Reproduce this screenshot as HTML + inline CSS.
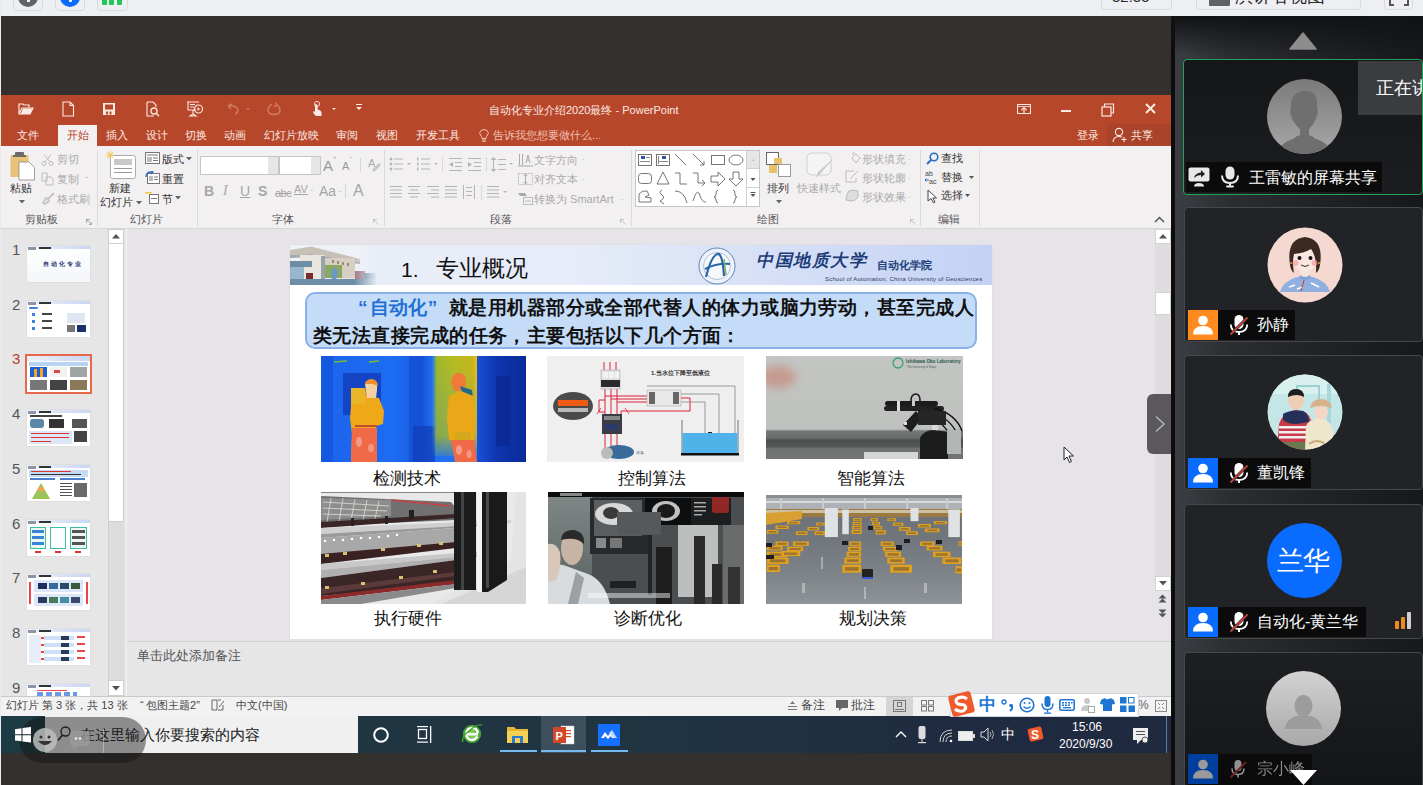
<!DOCTYPE html>
<html><head><meta charset="utf-8">
<style>
*{margin:0;padding:0;box-sizing:border-box}
html,body{width:1423px;height:785px;overflow:hidden;background:#34302d;font-family:"Liberation Sans",sans-serif;position:relative}
.a{position:absolute}
.t{position:absolute;white-space:nowrap;line-height:1}
</style></head><body><div id="wrap" style="position:absolute;left:0;top:0;width:1423px;height:785px;overflow:hidden;filter:blur(0.4px)">
<!-- top bar -->
<div class="a" style="left:0;top:0;width:1423px;height:16px;background:#eeeff2;overflow:hidden">
  <div class="a" style="left:0;top:0;width:1px;height:16px;background:#fff"></div>
  <div class="a" style="left:13px;top:-8px;width:30px;height:19px;border:1px solid #d9dade;border-radius:4px"></div>
  <div class="a" style="left:18px;top:-13px;width:20px;height:20px;border-radius:50%;background:#616469"></div>
  <div class="a" style="left:27px;top:-2px;width:3px;height:4px;background:#fff;border-radius:1px"></div>
  <div class="a" style="left:55px;top:-8px;width:30px;height:19px;border:1px solid #d9dade;border-radius:4px"></div>
  <div class="a" style="left:60px;top:-13px;width:20px;height:20px;border-radius:50%;background:#0a6cff"></div>
  <div class="a" style="left:69px;top:-2px;width:3px;height:4px;background:#fff;border-radius:1px"></div>
  <div class="a" style="left:97px;top:-8px;width:31px;height:19px;border:1px solid #d9dade;border-radius:4px"></div>
  <div class="a" style="left:102px;top:-5px;width:4.5px;height:10px;background:#1ec95a;border-radius:1px"></div>
  <div class="a" style="left:109px;top:-5px;width:4.5px;height:10px;background:#1ec95a;border-radius:1px"></div>
  <div class="a" style="left:117px;top:-5px;width:4.5px;height:10px;background:#1ec95a;border-radius:1px"></div>
  <div class="a" style="left:1101px;top:-8px;width:71px;height:18px;border:1px solid #d9dade;border-radius:3px;background:#eeeff2"></div>
  <div class="t" style="left:1112px;top:-11px;font-size:15px;color:#2a2a2a">32:35</div>
  <div class="a" style="left:1196px;top:-8px;width:165px;height:18px;border:1px solid #d9dade;border-radius:3px"></div>
  <div class="a" style="left:1209px;top:-6px;width:21px;height:12px;background:#5f6166;border-radius:1px"></div>
  <div class="t" style="left:1235px;top:-13px;font-size:18px;color:#2a2a2a">演讲者视图</div>
  <div class="a" style="left:1384px;top:-8px;width:29px;height:18px;border:1px solid #d9dade;border-radius:4px"></div>
  <div class="a" style="left:1389px;top:-4px;width:20px;height:10px;border:2px solid #555;border-top:none"></div>
  <div class="a" style="left:1394px;top:4px;width:10px;height:3px;background:#eeeff2"></div>
</div>
<!-- dark area -->
<div class="a" style="left:0;top:16px;width:1172px;height:79px;background:#34302d"></div>
<!-- ppt window -->
<div class="a" id="ppt" style="left:1px;top:95px;width:1170px;height:621px;background:#e6e6e6;overflow:hidden">
  <div class="a" style="left:0;top:0;width:1170px;height:51px;background:#b7472a"></div>
  <!-- qat icons -->
  <svg class="a" style="left:17px;top:7px" width="16" height="14" viewBox="0 0 16 14"><path d="M1 4 L1 12 L12 12 L15 6 L4 6 L1 12" stroke="#fbeae4" stroke-width="1.2" fill="none"/><path d="M2.5 12 L5 6.5 L14.5 6.5 L12 12Z" fill="#fbeae4"/><path d="M1 4 L1 2 L5 2 L6 3 L11 3 L11 5.5" stroke="#fbeae4" stroke-width="1.2" fill="none"/></svg>
  <svg class="a" style="left:60px;top:6px" width="14" height="16" viewBox="0 0 14 16"><path d="M2 1 L9 1 L12.5 4.5 L12.5 15 L2 15Z M9 1 L9 4.5 L12.5 4.5" stroke="#fbeae4" stroke-width="1.1" fill="none"/></svg>
  <svg class="a" style="left:101px;top:7px" width="14" height="14" viewBox="0 0 14 14"><path d="M1 1 L13 1 L13 13 L1 13Z" fill="#fbeae4"/><rect x="3" y="2.5" width="8" height="5" fill="#b7472a"/><rect x="4" y="9.5" width="2" height="3" fill="#b7472a"/><rect x="7.5" y="9.5" width="2" height="3" fill="#b7472a"/></svg>
  <svg class="a" style="left:144px;top:6px" width="16" height="16" viewBox="0 0 16 16"><path d="M2 1 L8 1 L11 4 L11 6 M2 1 L2 15 L9 15" stroke="#fbeae4" stroke-width="1.1" fill="none"/><circle cx="9" cy="10" r="3" stroke="#fbeae4" stroke-width="1.3" fill="none"/><path d="M11 12 L14 15" stroke="#fbeae4" stroke-width="1.5"/></svg>
  <svg class="a" style="left:185px;top:6px" width="18" height="16" viewBox="0 0 18 16"><path d="M1 1 L13 1 M2 1 L2 9 L10 9" stroke="#fbeae4" stroke-width="1.1" fill="none"/><rect x="4" y="3" width="5" height="1" fill="#fbeae4"/><rect x="4" y="5.5" width="4" height="1" fill="#fbeae4"/><circle cx="12.5" cy="8" r="4" stroke="#fbeae4" stroke-width="1.2" fill="none"/><path d="M11.5 6 L14 8 L11.5 10Z" fill="#fbeae4"/><path d="M7 9 L7 13 M4 15 L10 15 L7 13Z" stroke="#fbeae4" stroke-width="1.1" fill="none"/></svg>
  <svg class="a" style="left:224px;top:8px" width="26" height="12" viewBox="0 0 26 12"><path d="M3 3 L7 1 M3 3 L6 6 M3 3 Q12 2 13 7 Q13 10 10 11" stroke="#cf7a62" stroke-width="1.5" fill="none"/><path d="M21 5 L25 5 L23 7Z" fill="#cf7a62"/></svg>
  <svg class="a" style="left:266px;top:7px" width="14" height="14" viewBox="0 0 14 14"><path d="M10 3 Q13 5 13 8 Q13 12.5 7 12.5 Q1 12.5 1 8 Q1 4 5 2.5 M9 0.5 L10 3 L7 4.5" stroke="#cf7a62" stroke-width="1.5" fill="none"/></svg>
  <svg class="a" style="left:307px;top:5px" width="30" height="18" viewBox="0 0 30 18"><circle cx="9" cy="4" r="2.6" stroke="#f3d3c3" stroke-width="1" fill="none"/><path d="M8 4 Q9.5 4 9.5 5.5 L9.7 9.5 Q13 10 13.5 12.5 L13.5 16 L8 16 Q5.5 14 5 12 Q5.5 11 7 11.5 L7 5.5 Q7 4 8 4Z" fill="#fbeae4"/><path d="M24 8 L28 8 L26 10Z" fill="#fbeae4"/></svg>
  <svg class="a" style="left:354px;top:8px" width="8" height="8" viewBox="0 0 8 8"><rect x="1" y="1" width="6" height="1" fill="#fbeae4"/><path d="M1 4 L7 4 L4 7Z" fill="#fbeae4"/></svg>
  <div class="t" style="left:488px;top:10px;font-size:11px;color:#fbeae4">自动化专业介绍2020最终 - PowerPoint</div>
  <svg class="a" style="left:1016px;top:9px" width="14" height="10" viewBox="0 0 14 10"><rect x="0.5" y="0.5" width="13" height="9" stroke="#fbeae4" fill="none"/><rect x="0.5" y="2" width="13" height="0.8" fill="#fbeae4"/><path d="M7 3.5 L7 9 M4.5 6 L7 3.5 L9.5 6" stroke="#fbeae4" stroke-width="1.2" fill="none"/></svg>
  <div class="a" style="left:1060px;top:15px;width:10px;height:2px;background:#fbeae4"></div>
  <svg class="a" style="left:1100px;top:8px" width="14" height="14" viewBox="0 0 14 14"><rect x="1" y="4" width="9" height="9" stroke="#fbeae4" stroke-width="1.2" fill="none"/><path d="M3.5 4 L3.5 1 L12.5 1 L12.5 10 L10 10" stroke="#fbeae4" stroke-width="1.2" fill="none"/></svg>
  <svg class="a" style="left:1144px;top:8px" width="11" height="11" viewBox="0 0 11 11"><path d="M1 1 L10 10 M10 1 L1 10" stroke="#fbeae4" stroke-width="2"/></svg>
  <!-- tabs -->
  <div class="a" style="left:57px;top:30px;width:39px;height:21px;background:#f3f0f2"></div>
  <div class="t" style="left:16px;top:35px;font-size:11px;color:#fbeae4">文件</div>
  <div class="t" style="left:66px;top:35px;font-size:11px;color:#b7472a">开始</div>
  <div class="t" style="left:105px;top:35px;font-size:11px;color:#fbeae4">插入</div>
  <div class="t" style="left:145px;top:35px;font-size:11px;color:#fbeae4">设计</div>
  <div class="t" style="left:184px;top:35px;font-size:11px;color:#fbeae4">切换</div>
  <div class="t" style="left:223px;top:35px;font-size:11px;color:#fbeae4">动画</div>
  <div class="t" style="left:263px;top:35px;font-size:11px;color:#fbeae4">幻灯片放映</div>
  <div class="t" style="left:335px;top:35px;font-size:11px;color:#fbeae4">审阅</div>
  <div class="t" style="left:375px;top:35px;font-size:11px;color:#fbeae4">视图</div>
  <div class="t" style="left:415px;top:35px;font-size:11px;color:#fbeae4">开发工具</div>
  <svg class="a" style="left:478px;top:34px" width="10" height="13" viewBox="0 0 10 13"><path d="M3 9.5 Q3 7.5 1.5 6 Q0.5 4.5 0.8 3.5 Q1.5 0.6 5 0.6 Q8.5 0.6 9.2 3.5 Q9.5 4.5 8.5 6 Q7 7.5 7 9.5Z M3 11 L7 11 M3.5 12.5 L6.5 12.5" stroke="#f0c4b5" stroke-width="1" fill="none"/></svg>
  <div class="t" style="left:492px;top:35px;font-size:11px;color:#efc0b2">告诉我您想要做什么...</div>
  <div class="t" style="left:1076px;top:35px;font-size:11px;color:#fbeae4">登录</div>
  <div class="a" style="left:1106px;top:29px;width:64px;height:22px;background:#a9432a"></div>
  <svg class="a" style="left:1111px;top:32px" width="16" height="16" viewBox="0 0 16 16"><circle cx="7" cy="5" r="3.6" stroke="#fbeae4" stroke-width="1.1" fill="none"/><path d="M1 15 Q1.5 9.5 7 9.5 Q9 9.5 10 10.3 M12 10 L12 15 M9.5 12.5 L14.5 12.5" stroke="#fbeae4" stroke-width="1.1" fill="none"/></svg>
  <div class="t" style="left:1130px;top:35px;font-size:11px;color:#fbeae4">共享</div>
  <!-- ribbon -->
  <div class="a" style="left:0;top:51px;width:1170px;height:82px;background:#f3f0f2"></div>
</div>
<!-- main area -->
<div class="a" style="left:1px;top:229px;width:1170px;height:468px;background:#e6e4e8"></div>
<!-- thumbnails panel -->
<div class="a" style="left:1px;top:229px;width:125px;height:468px;background:#e6e6e6"></div>
<div class="a" style="left:126px;top:229px;width:1px;height:468px;background:#f2f2f2"></div>
<div class="a" style="left:108px;top:229px;width:16px;height:467px;background:#dcdcdc;border-left:1px solid #cfcfcf"></div>
<div class="a" style="left:108px;top:229px;width:16px;height:15px;background:#fff;border:1px solid #cfcfcf"></div>
<svg class="a" style="left:112px;top:234px" width="8" height="5"><path d="M0 4.5 L8 4.5 L4 0Z" fill="#555"/></svg>
<div class="a" style="left:108px;top:244px;width:16px;height:278px;background:#fff;border:1px solid #cfcfcf;border-top:none"></div>
<div class="a" style="left:108px;top:680px;width:16px;height:16px;background:#fff;border:1px solid #cfcfcf"></div>
<svg class="a" style="left:112px;top:686px" width="8" height="5"><path d="M0 0 L8 0 L4 4.5Z" fill="#555"/></svg>
<div class="t" style="left:12px;top:242px;font-size:15px;color:#555">1</div>
<div class="t" style="left:12px;top:297px;font-size:15px;color:#555">2</div>
<div class="t" style="left:12px;top:351px;font-size:15px;color:#c0392b">3</div>
<div class="t" style="left:12px;top:406px;font-size:15px;color:#555">4</div>
<div class="t" style="left:12px;top:461px;font-size:15px;color:#555">5</div>
<div class="t" style="left:12px;top:516px;font-size:15px;color:#555">6</div>
<div class="t" style="left:12px;top:570px;font-size:15px;color:#555">7</div>
<div class="t" style="left:12px;top:625px;font-size:15px;color:#555">8</div>
<div class="t" style="left:12px;top:680px;font-size:15px;color:#555">9</div>
<!-- thumb 1 -->
<div class="a" style="left:27px;top:246px;width:63px;height:36px;background:linear-gradient(180deg,#fff,#f4f6fa);box-shadow:0 0 1px #bbb;overflow:hidden">
  <div class="a" style="left:0;top:0;width:63px;height:3px;background:linear-gradient(90deg,#eef1f8,#c9d6f3)"></div>
  <div class="a" style="left:1px;top:1px;width:8px;height:3px;background:#8a96a6"></div><div class="a" style="left:12px;top:1px;width:12px;height:2px;background:#333"></div>
  <div class="t" style="left:16px;top:15px;font-size:6px;font-weight:bold;color:#2a3b7a;letter-spacing:2px">自动化专业</div>
</div>
<!-- thumb 2 -->
<div class="a" style="left:27px;top:301px;width:63px;height:36px;background:#fff;box-shadow:0 0 1px #bbb;overflow:hidden">
  <div class="a" style="left:0;top:0;width:63px;height:3px;background:linear-gradient(90deg,#eef1f8,#c9d6f3)"></div>
  <div class="a" style="left:1px;top:1px;width:8px;height:3px;background:#8a96a6"></div><div class="a" style="left:12px;top:1px;width:12px;height:2px;background:#333"></div>
  <div class="a" style="left:2px;top:6px;width:9px;height:2px;background:#3b82d9;border-radius:1px"></div>
  <div class="a" style="left:5px;top:12px;width:3px;height:3px;background:#3b82d9"></div><div class="a" style="left:15px;top:12px;width:10px;height:2px;background:#444"></div>
  <div class="a" style="left:5px;top:19px;width:3px;height:3px;background:#3b82d9"></div><div class="a" style="left:15px;top:19px;width:10px;height:2px;background:#444"></div>
  <div class="a" style="left:5px;top:26px;width:3px;height:3px;background:#3b82d9"></div><div class="a" style="left:15px;top:26px;width:10px;height:2px;background:#444"></div>
  <div class="a" style="left:40px;top:12px;width:18px;height:10px;background:#dfe6f2"></div>
  <div class="a" style="left:40px;top:24px;width:8px;height:7px;background:#777"></div><div class="a" style="left:50px;top:24px;width:9px;height:7px;background:#1b2f6e"></div>
</div>
<!-- thumb 3 selected -->
<div class="a" style="left:25px;top:354px;width:67px;height:40px;border:2px solid #e8694a;background:#fff;overflow:hidden">
  <div class="a" style="left:0;top:0;width:63px;height:5px;background:linear-gradient(90deg,#eef1f8,#c9d6f3)"></div>
  <div class="a" style="left:2px;top:6px;width:59px;height:4px;background:#b9d3f3"></div>
  <div class="a" style="left:3px;top:11px;width:17px;height:10px;background:#1e5fd6"></div><div class="a" style="left:7px;top:13px;width:3px;height:8px;background:#f5a623"></div><div class="a" style="left:13px;top:12px;width:3px;height:9px;background:#f5a623"></div>
  <div class="a" style="left:23px;top:11px;width:17px;height:10px;background:#f2f2f2"></div><div class="a" style="left:27px;top:14px;width:6px;height:3px;background:#d44"></div>
  <div class="a" style="left:43px;top:11px;width:17px;height:10px;background:#9fa5a3"></div>
  <div class="a" style="left:3px;top:24px;width:17px;height:10px;background:#777"></div>
  <div class="a" style="left:23px;top:24px;width:17px;height:10px;background:#444"></div>
  <div class="a" style="left:43px;top:24px;width:17px;height:10px;background:#8a7a5a"></div>
</div>
<!-- thumb 4 -->
<div class="a" style="left:27px;top:410px;width:63px;height:36px;background:#fff;box-shadow:0 0 1px #bbb;overflow:hidden">
  <div class="a" style="left:0;top:0;width:63px;height:3px;background:linear-gradient(90deg,#eef1f8,#c9d6f3)"></div>
  <div class="a" style="left:1px;top:1px;width:8px;height:3px;background:#8a96a6"></div><div class="a" style="left:12px;top:1px;width:12px;height:2px;background:#333"></div>
  <div class="a" style="left:3px;top:5px;width:32px;height:2px;background:#444"></div>
  <div class="a" style="left:3px;top:9px;width:14px;height:9px;background:#5b87a8;border-radius:3px"></div>
  <div class="a" style="left:22px;top:9px;width:15px;height:9px;background:#333"></div>
  <div class="a" style="left:45px;top:9px;width:15px;height:9px;background:#555"></div>
  <div class="a" style="left:2px;top:21px;width:43px;height:13px;background:#dde6f7"></div>
  <div class="a" style="left:4px;top:23px;width:38px;height:1px;background:#d33"></div><div class="a" style="left:4px;top:27px;width:38px;height:1px;background:#d33"></div><div class="a" style="left:4px;top:31px;width:20px;height:1px;background:#d33"></div>
  <div class="a" style="left:47px;top:21px;width:13px;height:11px;background:#444"></div>
</div>
<!-- thumb 5 -->
<div class="a" style="left:27px;top:465px;width:63px;height:36px;background:#fff;box-shadow:0 0 1px #bbb;overflow:hidden">
  <div class="a" style="left:0;top:0;width:63px;height:3px;background:linear-gradient(90deg,#eef1f8,#c9d6f3)"></div>
  <div class="a" style="left:1px;top:1px;width:8px;height:3px;background:#8a96a6"></div><div class="a" style="left:12px;top:1px;width:12px;height:2px;background:#333"></div>
  <div class="a" style="left:2px;top:5px;width:59px;height:7px;background:#c5daf5"></div><div class="a" style="left:4px;top:6px;width:40px;height:1px;background:#d33"></div><div class="a" style="left:4px;top:9px;width:50px;height:1px;background:#333"></div>
  <div class="a" style="left:3px;top:13px;width:25px;height:2px;background:#4a7fd0"></div><div class="a" style="left:33px;top:13px;width:25px;height:2px;background:#4a7fd0"></div>
  <svg class="a" style="left:2px;top:16px" width="28" height="19"><path d="M3 18 L12 2 L21 18Z" fill="#9ac35a"/><path d="M8 10 L16 10 L14 6 L10 6Z" fill="#f2a55a"/></svg>
  <div class="a" style="left:33px;top:18px;width:12px;height:14px;background:repeating-linear-gradient(180deg,#555 0 1px,#fff 1px 3px)"></div>
  <div class="a" style="left:47px;top:18px;width:13px;height:14px;background:#6a6a6a"></div>
</div>
<!-- thumb 6 -->
<div class="a" style="left:27px;top:520px;width:63px;height:36px;background:#fff;box-shadow:0 0 1px #bbb;overflow:hidden">
  <div class="a" style="left:0;top:0;width:63px;height:3px;background:linear-gradient(90deg,#eef1f8,#c9d6f3)"></div>
  <div class="a" style="left:1px;top:1px;width:8px;height:3px;background:#8a96a6"></div><div class="a" style="left:12px;top:1px;width:12px;height:2px;background:#333"></div>
  <div class="a" style="left:3px;top:7px;width:16px;height:22px;border:1px solid #3bbfa0;background:#eaf7f3"></div>
  <div class="a" style="left:23px;top:7px;width:16px;height:22px;border:1px solid #3bbfa0;background:#fff"></div>
  <div class="a" style="left:43px;top:7px;width:17px;height:22px;border:1px solid #3bbfa0;background:#eaf7f3"></div>
  <div class="a" style="left:5px;top:10px;width:12px;height:3px;background:#3b82d9"></div><div class="a" style="left:5px;top:16px;width:12px;height:3px;background:#3b82d9"></div><div class="a" style="left:5px;top:22px;width:12px;height:3px;background:#3b82d9"></div>
  <div class="a" style="left:45px;top:10px;width:13px;height:3px;background:#555"></div><div class="a" style="left:45px;top:16px;width:13px;height:3px;background:#555"></div><div class="a" style="left:45px;top:22px;width:13px;height:3px;background:#555"></div>
  <div class="a" style="left:8px;top:31px;width:6px;height:2px;background:#d33"></div><div class="a" style="left:28px;top:31px;width:6px;height:2px;background:#d33"></div><div class="a" style="left:48px;top:31px;width:6px;height:2px;background:#d33"></div>
</div>
<!-- thumb 7 -->
<div class="a" style="left:27px;top:574px;width:63px;height:36px;background:#fff;box-shadow:0 0 1px #bbb;overflow:hidden">
  <div class="a" style="left:0;top:0;width:63px;height:3px;background:linear-gradient(90deg,#eef1f8,#c9d6f3)"></div>
  <div class="a" style="left:1px;top:1px;width:8px;height:3px;background:#8a96a6"></div><div class="a" style="left:12px;top:1px;width:12px;height:2px;background:#333"></div>
  <div class="a" style="left:7px;top:6px;width:49px;height:12px;background:#dce8fa"></div>
  <div class="a" style="left:7px;top:20px;width:49px;height:12px;background:#dce8fa"></div>
  <div class="a" style="left:11px;top:9px;width:9px;height:6px;background:#1b2f5a"></div><div class="a" style="left:22px;top:9px;width:9px;height:6px;background:#3a6a9a"></div><div class="a" style="left:33px;top:9px;width:9px;height:6px;background:#2a4a6a"></div><div class="a" style="left:44px;top:9px;width:9px;height:6px;background:#3a5a3a"></div>
  <div class="a" style="left:11px;top:23px;width:9px;height:6px;background:#2a3a5a"></div><div class="a" style="left:22px;top:23px;width:9px;height:6px;background:#4a7a5a"></div><div class="a" style="left:33px;top:23px;width:9px;height:6px;background:#4a8aaa"></div><div class="a" style="left:44px;top:23px;width:9px;height:6px;background:#3a4a6a"></div>
  <div class="a" style="left:2px;top:8px;width:2px;height:22px;background:#e44"></div><div class="a" style="left:59px;top:8px;width:2px;height:22px;background:#e44"></div>
</div>
<!-- thumb 8 -->
<div class="a" style="left:27px;top:629px;width:63px;height:36px;background:#fff;box-shadow:0 0 1px #bbb;overflow:hidden">
  <div class="a" style="left:0;top:0;width:63px;height:3px;background:linear-gradient(90deg,#eef1f8,#c9d6f3)"></div>
  <div class="a" style="left:1px;top:1px;width:8px;height:3px;background:#8a96a6"></div><div class="a" style="left:12px;top:1px;width:12px;height:2px;background:#333"></div>
  <div class="a" style="left:2px;top:6px;width:12px;height:28px;background:#e8eef8"></div>
  <div class="a" style="left:17px;top:7px;width:30px;height:26px;background:repeating-linear-gradient(180deg,#cfe0f6 0 4px,#fff 4px 7px)"></div>
  <div class="a" style="left:34px;top:7px;width:8px;height:26px;background:repeating-linear-gradient(180deg,#2a3a5a 0 4px,#fff 4px 7px)"></div>
  <div class="a" style="left:50px;top:7px;width:8px;height:26px;background:repeating-linear-gradient(180deg,#e44 0 2px,#fff 2px 7px)"></div>
  <div class="a" style="left:14px;top:8px;width:3px;height:24px;background:repeating-linear-gradient(180deg,#e44 0 2px,#fff 2px 7px)"></div>
</div>
<!-- thumb 9 -->
<div class="a" style="left:27px;top:684px;width:63px;height:12px;background:#fff;box-shadow:0 0 1px #bbb;overflow:hidden">
  <div class="a" style="left:0;top:0;width:63px;height:3px;background:linear-gradient(90deg,#eef1f8,#c9d6f3)"></div>
  <div class="a" style="left:1px;top:1px;width:8px;height:3px;background:#8a96a6"></div><div class="a" style="left:12px;top:1px;width:12px;height:2px;background:#333"></div>
  <div class="a" style="left:10px;top:6px;width:30px;height:1px;background:#e44"></div>
  <div class="a" style="left:10px;top:8px;width:40px;height:4px;background:repeating-linear-gradient(90deg,#6a9ae6 0 6px,#fff 6px 9px)"></div>
</div>
<!-- right scrollbar -->
<div class="a" style="left:1155px;top:229px;width:16px;height:362px;background:#dedcde"></div>
<div class="a" style="left:1155px;top:229px;width:16px;height:15px;background:#fff;border:1px solid #d2d2d2"></div>
<svg class="a" style="left:1159px;top:234px" width="8" height="5"><path d="M0 4.5 L8 4.5 L4 0Z" fill="#555"/></svg>
<div class="a" style="left:1155px;top:292px;width:16px;height:23px;background:#fff;border:1px solid #d2d2d2"></div>
<div class="a" style="left:1155px;top:576px;width:16px;height:15px;background:#fff;border:1px solid #d2d2d2"></div>
<svg class="a" style="left:1159px;top:581px" width="8" height="5"><path d="M0 0 L8 0 L4 4.5Z" fill="#555"/></svg>
<svg class="a" style="left:1158px;top:594px" width="9" height="24" viewBox="0 0 9 24"><path d="M0.5 4.5 L4.5 0.5 L8.5 4.5Z M0.5 8.5 L4.5 4.5 L8.5 8.5Z" fill="#555"/><path d="M0.5 15.5 L4.5 19.5 L8.5 15.5Z M0.5 19.5 L4.5 23.5 L8.5 19.5Z" fill="#555"/></svg>
<!-- slide -->
<div class="a" style="left:290px;top:245px;width:702px;height:394px;background:#fff;box-shadow:0 0 1px #c8c8c8;overflow:hidden">
  <div class="a" style="left:0;top:0;width:702px;height:40px;background:linear-gradient(90deg,#e9eef7 0%,#e6ecf8 40%,#d3ddf6 75%,#c3d2f4 100%)"></div>
  <!-- building photo -->
  <svg class="a" style="left:0;top:0" width="92" height="40" viewBox="0 0 92 40">
    <defs><linearGradient id="bf" x1="0" x2="1"><stop offset="0.7" stop-color="#fff" stop-opacity="1"/><stop offset="0.95" stop-color="#fff" stop-opacity="0"/></linearGradient><mask id="bm"><rect width="92" height="40" fill="url(#bf)"/></mask></defs>
    <g mask="url(#bm)">
    <rect width="92" height="40" fill="#eef2f6"/>
    <path d="M0 5 L21 1.5 L70 14 L70 17 L21 9 L0 10Z" fill="#c6c0b6"/>
    <path d="M0 10 L21 9 L70 17 L70 19 L21 12 L0 13Z" fill="#a8a8a8"/>
    <rect x="10" y="10" width="24" height="25" fill="#e9e5e0"/>
    <rect x="31" y="11" width="4" height="25" fill="#9aa2aa"/>
    <rect x="35" y="13" width="30" height="20" fill="#d8cfc4"/>
    <g fill="#9a8a78"><rect x="42" y="15" width="2" height="3"/><rect x="47" y="16" width="2" height="3"/><rect x="52" y="17" width="2" height="3"/><rect x="57" y="18" width="2" height="3"/></g>
    <rect x="35" y="20" width="17" height="13" fill="#8aa862"/>
    <path d="M41 26 L45 22 L48 26 L46 36 L42 36Z" fill="#6a9ac0"/>
    <rect x="0" y="16" width="22" height="6" fill="#6e8ca4"/>
    <rect x="0" y="22" width="14" height="14" fill="#9ab6cc"/>
    <rect x="16" y="28" width="7" height="8" fill="#7a2a2a"/>
    <path d="M50 33 L74 33 L74 36 L50 37Z" fill="#e8e4dc"/>
    <rect x="65" y="26" width="10" height="10" fill="#a07888"/>
    <rect x="74" y="28" width="12" height="8" fill="#5a7890"/>
    <rect x="0" y="34" width="92" height="6" fill="#6e8ea8"/>
    </g>
  </svg>
  <div class="t" style="left:111px;top:14px;font-size:21px;color:#111">1.</div><div class="t" style="left:146px;top:13px;font-size:22.5px;color:#111">专业概况</div>
  <!-- logo -->
  <svg class="a" style="left:407px;top:2px" width="40" height="38" viewBox="0 0 40 38">
    <circle cx="20" cy="19" r="18" fill="#eef3fa" stroke="#5f86b0" stroke-width="1"/>
    <circle cx="20" cy="19" r="13.5" fill="#f6f8fc" stroke="#7fa0c4" stroke-width="0.6"/>
    <path d="M9 30 Q15 6 22 7 Q26 10 27 29" stroke="#2a64a8" stroke-width="2.2" fill="none"/>
    <path d="M8 22 Q20 16 33 17" stroke="#2a64a8" stroke-width="2" fill="none"/>
    <path d="M27 12 L29 28" stroke="#7cb36a" stroke-width="1.5"/>
  </svg>
  <div class="t" style="left:466px;top:7px;font-size:17px;font-weight:bold;color:#1d3d78;font-family:'Liberation Serif',serif;font-style:italic;letter-spacing:1.6px">中国地质大学</div>
  <div class="t" style="left:587px;top:15px;font-size:10.5px;font-weight:bold;color:#1d3d78">自动化学院</div>
  <div class="t" style="left:535px;top:31px;font-size:6px;color:#2d3b5e;letter-spacing:0.2px">School of Automation, China University of Geosciences</div>
  <!-- text box -->
  <div class="a" style="left:15px;top:47px;width:672px;height:57px;border:2px solid #8ab2ea;border-radius:10px;background:#c4dcf7"></div>
  <div class="t" style="left:68px;top:53px;font-size:19px;letter-spacing:0.45px;font-weight:bold;color:#111"><span style="color:#1e6fd6"><span style="display:inline-block;width:11.5px">“</span>自动化<span style="display:inline-block;width:21px">”</span></span>就是用机器部分或全部代替人的体力或脑力劳动，甚至完成人</div>
  <div class="t" style="left:23px;top:81px;font-size:19px;letter-spacing:0.45px;font-weight:bold;color:#111">类无法直接完成的任务，主要包括以下几个方面：</div>
  <!-- photo 1 thermal -->
  <div class="a" style="left:31px;top:111px;width:205px;height:106px;overflow:hidden;background:#1a62ea">
    <svg class="a" style="left:0;top:0" width="205" height="106" viewBox="0 0 205 106">
      <defs>
        <linearGradient id="th1" x1="0" x2="1"><stop offset="0" stop-color="#1c64ec"/><stop offset="0.35" stop-color="#1d6cf2"/><stop offset="0.5" stop-color="#1858e0"/><stop offset="0.55" stop-color="#1f70f0"/><stop offset="1" stop-color="#2a7af0"/></linearGradient>
        <linearGradient id="th2" x1="0" x2="1"><stop offset="0" stop-color="#3a90e0" stop-opacity="0"/><stop offset="0.12" stop-color="#a0b828"/><stop offset="0.5" stop-color="#b8bc20"/><stop offset="0.9" stop-color="#c8b818"/><stop offset="1" stop-color="#f0c010"/></linearGradient>
        <linearGradient id="th2v" x1="0" y1="0" x2="0" y2="1"><stop offset="0" stop-color="#fff" stop-opacity="1"/><stop offset="0.75" stop-color="#fff" stop-opacity="0.8"/><stop offset="1" stop-color="#fff" stop-opacity="0"/></linearGradient>
        <mask id="th2m"><rect width="205" height="106" fill="url(#th2v)"/></mask>
        <linearGradient id="th3" x1="0" x2="1"><stop offset="0" stop-color="#1a50d8"/><stop offset="0.4" stop-color="#0e36b0"/><stop offset="1" stop-color="#0a2a98"/></linearGradient>
      </defs>
      <rect width="205" height="106" fill="url(#th1)"/>
      <rect x="0" y="0" width="12" height="106" fill="#1558e0"/>
      <rect x="22" y="17" width="38" height="42" fill="#1244c4"/>
      <rect x="88" y="0" width="14" height="106" fill="#1450d4" opacity=".8"/>
      <rect x="92" y="70" width="22" height="36" fill="#0f3cb8" opacity=".7"/>
      <rect x="110" y="0" width="46" height="100" fill="url(#th2)" mask="url(#th2m)"/>
      <rect x="156" y="0" width="49" height="106" fill="url(#th3)"/>
      <rect x="175" y="20" width="14" height="70" fill="#0a2890" opacity=".7"/>
      <path d="M13 6 L26 5 M48 6 L58 5" stroke="#7ab83a" stroke-width="1.4"/>
      <!-- person 1 -->
      <path d="M30 33 L44 32 L46 40 L58 42 L63 55 L62 68 L55 70 L56 106 L30 106 L31 78 L29 62 L30 50Z" fill="#eea818"/>
      <rect x="30" y="32" width="14" height="16" fill="#e8b428"/>
      <path d="M44 28 Q45 24 51 24 Q57 26 56 34 L55 42 L46 42Z" fill="#f5d0a0"/>
      <path d="M44 28 Q45 23 51 23 Q57 24 57 30 L52 28Z" fill="#f09030"/>
      <path d="M31 72 L56 72 L56 106 L30 106Z" fill="#f06a48"/>
      <ellipse cx="38" cy="86" rx="3" ry="5" fill="#f8a898" opacity=".8"/><ellipse cx="50" cy="92" rx="3" ry="4" fill="#f8a898" opacity=".7"/>
      <path d="M34 70 L56 70" stroke="#c84a30" stroke-width="2"/>
      <!-- person 2 -->
      <path d="M130 26 Q131 17 138 17 Q146 18 145 27 L143 35 L133 35Z" fill="#f07a38"/>
      <path d="M139 30 L151 34 L152 42 L142 40Z" fill="#206a88"/>
      <path d="M128 40 L140 35 L152 40 L154 60 L153 84 L128 84 L126 62Z" fill="#eaa818"/>
      <path d="M130 84 L153 84 L156 106 L134 106Z" fill="#f06a48"/>
      <ellipse cx="138" cy="94" rx="3" ry="5" fill="#f8a898" opacity=".8"/><ellipse cx="148" cy="98" rx="2.5" ry="4" fill="#f8a898" opacity=".7"/>
      <path d="M134 76 L150 76 L150 84 L134 84Z" fill="#c8a820" opacity=".7"/>
    </svg>
  </div>
  <div class="t" style="left:83px;top:225px;font-size:17px;color:#111">检测技术</div>
  <!-- photo 2 circuit -->
  <div class="a" style="left:257px;top:111px;width:197px;height:106px;background:#efefef;overflow:hidden">
    <svg class="a" style="left:0;top:0" width="197" height="106" viewBox="0 0 197 106">
      <g stroke="#e0203a" stroke-width="1" fill="none">
        <path d="M57 6 L57 16 M63 6 L63 16 M69 6 L69 16"/>
        <path d="M58 32 L58 58 M64 32 L64 58 M70 32 L70 58"/>
        <path d="M58 40 L104 40 M64 43 L104 43 M70 46 L104 46"/>
        <path d="M52 56 L52 44 L58 44 M52 56 L58 56"/>
        <path d="M133 42 L143 42 L143 55 L74 55 L74 58"/>
        <path d="M58 78 L58 92 M64 78 L64 92 M70 78 L70 92"/>
      </g>
      <path d="M54 52 L50 58 M78 52 L82 58" stroke="#e0203a" stroke-width="0.8"/>
      <g stroke="#777" stroke-width="0.7" fill="none"><path d="M100 30 L188 30 L188 92 M133 38 L172 38 L172 86 M133 46 L158 46 L158 78"/></g>
      <rect x="161" y="76" width="4" height="3" fill="#222"/><rect x="170" y="85" width="4" height="3" fill="#222"/><rect x="185" y="90" width="4" height="3" fill="#222"/>
      <rect x="54" y="14" width="19" height="19" fill="#e0e0e0" stroke="#aaa" stroke-width="0.6"/>
      <rect x="54" y="24" width="19" height="7" fill="#2a2a2a"/>
      <rect x="56" y="16" width="5" height="6" fill="#f4f4f4"/><rect x="62" y="16" width="5" height="6" fill="#f4f4f4"/><rect x="68" y="16" width="4" height="6" fill="#f4f4f4"/>
      <rect x="55" y="58" width="20" height="20" fill="#3a3d44"/>
      <rect x="57" y="60" width="16" height="4" fill="#888"/>
      <rect x="58" y="68" width="13" height="6" fill="#2a3a6a"/>
      <rect x="100" y="34" width="34" height="16" fill="#e8e8e8" stroke="#aaa" stroke-width="0.6"/>
      <rect x="102" y="36" width="6" height="12" fill="#666"/><rect x="126" y="36" width="6" height="12" fill="#666"/>
      <ellipse cx="26" cy="50" rx="20" ry="14" fill="#4a4a4a"/>
      <rect x="11" y="44" width="30" height="6" fill="#f05a14"/>
      <rect x="11" y="52" width="30" height="4" fill="#b8b8b8"/>
      <path d="M135 64 L135 98 L191 98 L191 64" stroke="#555" stroke-width="0.8" fill="none"/>
      <rect x="135.5" y="77" width="55" height="21" fill="#4fb3ea"/>
      <rect x="134" y="97" width="58" height="2.5" fill="#111"/>
      <ellipse cx="72" cy="96" rx="15" ry="7" fill="#3a6a9a"/>
      <ellipse cx="60" cy="97" rx="6" ry="6" fill="#bbb"/>
      <text x="104" y="19" font-size="6" fill="#333" font-weight="bold" font-family="Liberation Sans">1.当水位下降至低液位</text>
      <text x="89" y="98" font-size="4" fill="#444" font-family="Liberation Sans">水泵</text>
    </svg>
  </div>
  <div class="t" style="left:328px;top:225px;font-size:17px;color:#111">控制算法</div>
  <!-- photo 3 robot -->
  <div class="a" style="left:476px;top:111px;width:197px;height:103px;overflow:hidden;background:linear-gradient(180deg,#c2c5c2 0%,#bec1be 71%,#737775 73%,#6a6e6c 79%,#4c504e 82%,#535755 88%,#6e7270 90%,#707472 100%)">
    <div class="a" style="left:-6px;top:10px;width:36px;height:22px;background:#c8968a;border-radius:50%;filter:blur(4px);opacity:.9"></div>
    <svg class="a" style="left:0;top:0" width="197" height="103" viewBox="0 0 197 103">
      <rect x="119" y="45" width="53" height="5" rx="2.5" fill="#1c1c1c"/>
      <rect x="118" y="50" width="60" height="5" rx="2.5" fill="#222"/>
      <rect x="131" y="45" width="3" height="10" fill="#ddd"/><rect x="146" y="45" width="3" height="5" fill="#ccc"/>
      <path d="M145 45 Q145 38 150 38 Q154 38 154 45" stroke="#1a1a1a" stroke-width="1.5" fill="none"/>
      <path d="M150 55 L137 69 L145 76 L156 62Z" fill="#1e1e1e"/>
      <rect x="138" y="66" width="3" height="3" fill="#ddd"/>
      <path d="M168 52 Q190 58 196 75" stroke="#111" stroke-width="1.3" fill="none"/>
      <path d="M165 56 Q185 62 192 80" stroke="#111" stroke-width="1.3" fill="none"/>
      <path d="M160 58 Q178 66 186 82" stroke="#111" stroke-width="1.3" fill="none"/>
      <rect x="152" y="55" width="28" height="14" fill="#262626"/>
      <rect x="166" y="69" width="6" height="8" fill="#d8d8d8"/>
      <path d="M154 103 L154 82 Q158 74 168 74 L182 76 L182 103Z" fill="#1c1c1c"/>
      <rect x="181" y="74" width="14" height="24" fill="#b2b6b6"/>
      <rect x="98" y="96" width="54" height="7" fill="#d4d6d6"/>
      <text x="140" y="7" font-size="4.6" fill="#2a5a4a" font-family="Liberation Sans" font-weight="bold">Ishikawa Oku Laboratory</text>
      <text x="141" y="11.5" font-size="2.8" fill="#4a5a5a" font-family="Liberation Sans">The University of Tokyo</text>
      <circle cx="132" cy="7" r="5" stroke="#3aa07a" stroke-width="1.3" fill="none"/>
    </svg>
  </div>
  <div class="t" style="left:547px;top:225px;font-size:17px;color:#111">智能算法</div>
  <!-- photo 4 warehouse shelves -->
  <div class="a" style="left:31px;top:247px;width:205px;height:112px;overflow:hidden;background:#e9e9e9">
    <svg class="a" style="left:0;top:0" width="205" height="112" viewBox="0 0 205 112">
      <path d="M0 0 L150 0" stroke="#222" stroke-width="1.2"/>
      <path d="M205 0 L205 112 L110 112 L190 70 L195 0Z" fill="#e4e4e4"/>
      <path d="M120 112 L205 75 L205 112Z" fill="#d6d6d6"/>
      <!-- top layer -->
      <path d="M0 4 L130 10 L135 16 L135 28 L0 34Z" fill="#707070"/>
      <path d="M0 6 L70 8 L70 24 L0 28Z" fill="#9a9a9a" opacity=".7"/>
      <g stroke="#e8e8e0" stroke-width="0.8" opacity=".9"><path d="M2 10 L68 14 M2 16 L66 19 M2 22 L60 24 M10 6 L6 30 M22 6 L18 30 M34 7 L30 29 M46 8 L42 28 M58 9 L54 27"/></g>
      <path d="M70 8 L130 14" stroke="#c84040" stroke-width="1.5"/>
      <path d="M0 30 L135 22 L135 26 L0 36Z" fill="#3a2626"/>
      <rect x="30" y="26" width="3" height="8" fill="#222"/><rect x="64" y="24" width="3" height="8" fill="#222"/><rect x="88" y="18" width="5" height="9" fill="#222"/>
      <!-- plate 1 -->
      <path d="M0 36 L190 28 L190 31 L0 42Z" fill="#cfcfcf"/>
      <path d="M0 42 L190 31 L135 36 L0 46Z" fill="#9a9a9a"/>
      <!-- middle layer -->
      <path d="M0 46 L135 36 L135 52 L0 64Z" fill="#a8a8a8"/>
      <g fill="#fff"><circle cx="4" cy="49" r="1.3"/><circle cx="13" cy="48" r="1.3"/><circle cx="22" cy="48" r="1.3"/><circle cx="31" cy="47" r="1.3"/><circle cx="40" cy="46" r="1.3"/><circle cx="49" cy="46" r="1.3"/><circle cx="58" cy="45" r="1.3"/><circle cx="67" cy="44" r="1.3"/><circle cx="76" cy="43" r="1.3"/></g>
      <path d="M0 62 L135 50 L135 56 L0 72Z" fill="#3a2222"/>
      <g fill="#d8c070"><rect x="4" y="62" width="4" height="3"/><rect x="22" y="60" width="4" height="3"/><rect x="60" y="56" width="4" height="3"/><rect x="96" y="52" width="4" height="3"/><rect x="118" y="50" width="4" height="3"/></g>
      <!-- plate 2 -->
      <path d="M0 72 L186 57 L186 60 L0 78Z" fill="#c8c8c8"/>
      <path d="M0 78 L186 60 L135 68 L0 86Z" fill="#b0b0b0"/>
      <!-- bottom layer -->
      <path d="M0 86 L135 68 L135 92 L0 104Z" fill="#3a2626"/>
      <path d="M0 96 L135 80 L135 84 L0 102Z" fill="#5a3a3a"/>
      <path d="M0 104 L135 88 L135 92 L0 108Z" fill="#8a2a2a"/>
      <path d="M0 108 L135 92 L135 96 L40 112 L0 112Z" fill="#8a8a8a"/>
      <g fill="#d8c070"><rect x="4" y="94" width="4" height="3"/><rect x="40" y="90" width="4" height="3"/><rect x="78" y="84" width="4" height="3"/><rect x="112" y="78" width="4" height="3"/></g>
      <!-- columns -->
      <rect x="133" y="0" width="22" height="98" fill="#1c1c1c"/>
      <rect x="140" y="0" width="3" height="98" fill="#444"/>
      <rect x="156" y="0" width="5" height="100" fill="#f4f4f4"/>
      <path d="M161 0 L186 0 L186 88 L167 100 L161 100Z" fill="#1a1a1a"/>
      <rect x="165" y="0" width="3" height="96" fill="#4a4a4a"/>
    </svg>
  </div>
  <div class="t" style="left:84px;top:365px;font-size:17px;color:#111">执行硬件</div>
  <!-- photo 5 doctor -->
  <div class="a" style="left:258px;top:247px;width:196px;height:112px;overflow:hidden;background:#0d0d0d">
    <svg class="a" style="left:0;top:0" width="196" height="112" viewBox="0 0 196 112">
      <defs><linearGradient id="dw" x1="0" y1="0" x2="0" y2="1"><stop offset="0" stop-color="#7e8686"/><stop offset="1" stop-color="#5a6060"/></linearGradient></defs>
      <rect x="0" y="5" width="196" height="107" fill="#4a4e50"/>
      <rect x="0" y="5" width="44" height="107" fill="url(#dw)"/>
      <rect x="42" y="6" width="58" height="56" fill="#262a2c"/>
      <rect x="46" y="8" width="48" height="36" fill="#5a5e60"/>
      <ellipse cx="66" cy="22" rx="19" ry="11" fill="#d8d8d8"/>
      <ellipse cx="63" cy="21" rx="8" ry="6" fill="#3a3a3a"/>
      <rect x="48" y="46" width="10" height="10" fill="#888"/><rect x="62" y="46" width="12" height="10" fill="#777"/>
      <rect x="97" y="6" width="46" height="27" fill="#0c0e10"/>
      <ellipse cx="118" cy="19" rx="14" ry="10" fill="#c0c0c0"/>
      <ellipse cx="118" cy="19" rx="9" ry="7" fill="#1a1a1a"/>
      <rect x="143" y="6" width="40" height="27" fill="#1c1e20"/>
      <g fill="#aaa"><rect x="146" y="10" width="12" height="1.5"/><rect x="146" y="14" width="12" height="1.5"/><rect x="146" y="18" width="12" height="1.5"/><rect x="146" y="22" width="8" height="1.5"/></g>
      <rect x="69" y="20" width="44" height="23" fill="#55595b"/>
      <rect x="100" y="43" width="4" height="60" fill="#222"/>
      <rect x="130" y="33" width="40" height="72" fill="#bdbfbf"/>
      <rect x="175" y="33" width="21" height="79" fill="#6a6c6c"/>
      <rect x="108" y="55" width="16" height="57" fill="#1e1e1e"/>
      <rect x="146" y="44" width="11" height="68" fill="#2a2a2a"/>
      <rect x="164" y="72" width="10" height="40" fill="#2a2a2a"/>
      <rect x="180" y="75" width="12" height="37" fill="#333"/>
      <path d="M0 80 Q8 70 18 74 L40 82 Q56 88 62 112 L0 112Z" fill="#d8dcde"/>
      <path d="M28 80 L36 86 L30 112 L20 112Z" fill="#9aa0a4"/>
      <ellipse cx="24" cy="56" rx="11" ry="17" fill="#c8b4a4"/>
      <path d="M13 48 Q14 37 26 38 Q37 40 36 52 Q28 44 13 48Z" fill="#2a2a2a"/>
      <path d="M0 52 Q8 50 12 60 Q14 74 8 88 L0 90Z" fill="#d8c8bc"/>
      <rect x="62" y="89" width="26" height="7" fill="#1e2022"/>
      <rect x="164" y="1" width="17" height="20" rx="3" fill="#a02828" opacity=".9"/>
      <rect x="40" y="101" width="82" height="5" fill="#fff" opacity=".45"/>
      <rect x="0" y="0" width="196" height="5" fill="#0d0d0d"/>
      <rect x="12" y="1" width="22" height="3" fill="#888"/>
    </svg>
  </div>
  <div class="t" style="left:324px;top:365px;font-size:17px;color:#111">诊断优化</div>
  <!-- photo 6 warehouse robots -->
  <div class="a" style="left:476px;top:250px;width:196px;height:109px;overflow:hidden;background:linear-gradient(180deg,#6a7076 0%,#70767c 40%,#7c8286 70%,#8e9498 100%)">
    <svg class="a" style="left:0;top:0" width="196" height="109" viewBox="0 0 196 109">
      <rect x="0" y="0" width="196" height="15" fill="#aeb2b6"/>
      <rect x="0" y="0" width="196" height="3" fill="#8a8e92"/>
      <rect x="0" y="6" width="196" height="2" fill="#d8dadc"/>
      <g fill="#c8ccce"><rect x="14" y="3" width="2" height="12"/><rect x="56" y="3" width="2" height="12"/><rect x="98" y="3" width="2" height="12"/><rect x="140" y="3" width="2" height="12"/><rect x="180" y="3" width="2" height="12"/></g>
      <rect x="0" y="14" width="196" height="8" fill="#9a7a40"/>
      <rect x="0" y="15" width="196" height="3" fill="#f0f0e8" opacity=".6"/>
      <path d="M0 18 L36 16 L36 24 L0 30Z" fill="#d8a030"/>
      <rect x="58.8" y="13.1" width="13.1" height="29.0" fill="#dfe2e4"/><rect x="76.3" y="14.5" width="6.5" height="24.7" fill="#dfe2e4"/><rect x="144.5" y="13.1" width="8.0" height="13.1" fill="#dfe2e4"/><rect x="182.3" y="14.5" width="11.6" height="27.6" fill="#dfe2e4"/>
      <rect x="87.1" y="23.2" width="8.7" height="2.9" fill="#e0a020"/><rect x="88.5" y="24.1" width="6.1" height="1.3" fill="#9a7430"/><rect x="86.7" y="26.9" width="9.0" height="3.2" fill="#e0a020"/><rect x="88.1" y="27.8" width="6.3" height="1.4" fill="#9a7430"/><rect x="86.1" y="30.8" width="9.6" height="3.5" fill="#e0a020"/><rect x="87.6" y="31.8" width="6.7" height="1.6" fill="#9a7430"/><rect x="85.5" y="34.9" width="10.2" height="4.1" fill="#e0a020"/><rect x="87.1" y="36.1" width="7.1" height="1.8" fill="#9a7430"/><rect x="83.5" y="46.5" width="11.6" height="4.4" fill="#e0a020"/><rect x="85.3" y="47.8" width="8.1" height="2.0" fill="#9a7430"/><rect x="82.1" y="51.6" width="13.1" height="4.6" fill="#e0a020"/><rect x="84.0" y="53.0" width="9.2" height="2.1" fill="#9a7430"/><rect x="80.6" y="56.6" width="14.5" height="5.2" fill="#e0a020"/><rect x="82.8" y="58.2" width="10.2" height="2.4" fill="#9a7430"/><rect x="78.4" y="62.5" width="16.7" height="6.1" fill="#e0a020"/><rect x="80.9" y="64.3" width="11.7" height="2.7" fill="#9a7430"/><rect x="76.3" y="69.7" width="18.9" height="8.0" fill="#e0a020"/><rect x="79.1" y="72.1" width="13.2" height="3.6" fill="#9a7430"/><rect x="104.6" y="23.2" width="7.3" height="2.9" fill="#e0a020"/><rect x="105.7" y="24.1" width="5.1" height="1.3" fill="#9a7430"/><rect x="106.0" y="26.9" width="8.0" height="3.2" fill="#e0a020"/><rect x="107.2" y="27.8" width="5.6" height="1.4" fill="#9a7430"/><rect x="107.5" y="30.8" width="8.7" height="3.5" fill="#e0a020"/><rect x="108.8" y="31.8" width="6.1" height="1.6" fill="#9a7430"/><rect x="109.7" y="35.1" width="10.2" height="4.4" fill="#e0a020"/><rect x="111.2" y="36.5" width="7.1" height="2.0" fill="#9a7430"/><rect x="114.7" y="46.5" width="13.1" height="4.4" fill="#e0a020"/><rect x="116.7" y="47.8" width="9.2" height="2.0" fill="#9a7430"/><rect x="116.9" y="51.6" width="14.5" height="4.6" fill="#e0a020"/><rect x="119.1" y="53.0" width="10.2" height="2.1" fill="#9a7430"/><rect x="119.1" y="56.6" width="16.0" height="5.2" fill="#e0a020"/><rect x="121.5" y="58.2" width="11.2" height="2.4" fill="#9a7430"/><rect x="121.3" y="62.5" width="17.4" height="6.1" fill="#e0a020"/><rect x="123.9" y="64.3" width="12.2" height="2.7" fill="#9a7430"/><rect x="124.2" y="69.7" width="21.8" height="8.0" fill="#e0a020"/><rect x="127.5" y="72.1" width="15.3" height="3.6" fill="#9a7430"/><rect x="9.4" y="46.5" width="13.1" height="4.4" fill="#e0a020"/><rect x="11.4" y="47.8" width="9.2" height="2.0" fill="#9a7430"/><rect x="26.9" y="46.5" width="16.0" height="4.4" fill="#e0a020"/><rect x="29.3" y="47.8" width="11.2" height="2.0" fill="#9a7430"/><rect x="0.7" y="50.8" width="16.0" height="4.6" fill="#e0a020"/><rect x="3.1" y="52.2" width="11.2" height="2.1" fill="#9a7430"/><rect x="21.1" y="51.6" width="16.0" height="4.6" fill="#e0a020"/><rect x="23.5" y="53.0" width="11.2" height="2.1" fill="#9a7430"/><rect x="0.7" y="56.6" width="20.3" height="5.5" fill="#e0a020"/><rect x="3.8" y="58.3" width="14.2" height="2.5" fill="#9a7430"/><rect x="15.3" y="55.9" width="18.9" height="5.2" fill="#e0a020"/><rect x="18.1" y="57.5" width="13.2" height="2.4" fill="#9a7430"/><rect x="0.7" y="62.5" width="21.8" height="6.5" fill="#e0a020"/><rect x="4.0" y="64.4" width="15.3" height="2.9" fill="#9a7430"/><rect x="0.7" y="69.7" width="13.1" height="7.3" fill="#e0a020"/><rect x="2.7" y="71.9" width="9.2" height="3.3" fill="#9a7430"/><rect x="29.8" y="36.3" width="11.6" height="3.8" fill="#e0a020"/><rect x="31.5" y="37.4" width="8.1" height="1.7" fill="#9a7430"/><rect x="41.4" y="32.0" width="11.6" height="3.5" fill="#e0a020"/><rect x="43.1" y="33.0" width="8.1" height="1.6" fill="#9a7430"/><rect x="50.1" y="27.6" width="8.7" height="2.9" fill="#e0a020"/><rect x="51.4" y="28.5" width="6.1" height="1.3" fill="#9a7430"/><rect x="48.7" y="36.3" width="10.2" height="3.8" fill="#e0a020"/><rect x="50.2" y="37.4" width="7.1" height="1.7" fill="#9a7430"/><rect x="0.7" y="34.9" width="11.6" height="3.8" fill="#e0a020"/><rect x="2.5" y="36.0" width="8.1" height="1.7" fill="#9a7430"/><rect x="9.4" y="30.5" width="13.1" height="3.5" fill="#e0a020"/><rect x="11.4" y="31.5" width="9.2" height="1.6" fill="#9a7430"/><rect x="21.1" y="26.1" width="13.1" height="3.2" fill="#e0a020"/><rect x="23.0" y="27.1" width="9.2" height="1.4" fill="#9a7430"/><rect x="121.3" y="23.2" width="8.7" height="2.9" fill="#e0a020"/><rect x="122.6" y="24.1" width="6.1" height="1.3" fill="#9a7430"/><rect x="127.1" y="27.6" width="10.2" height="3.2" fill="#e0a020"/><rect x="128.6" y="28.6" width="7.1" height="1.4" fill="#9a7430"/><rect x="132.9" y="32.0" width="11.6" height="3.8" fill="#e0a020"/><rect x="134.6" y="33.1" width="8.1" height="1.7" fill="#9a7430"/><rect x="140.2" y="36.3" width="11.6" height="3.8" fill="#e0a020"/><rect x="141.9" y="37.4" width="8.1" height="1.7" fill="#9a7430"/><rect x="151.8" y="29.0" width="13.1" height="3.5" fill="#e0a020"/><rect x="153.7" y="30.1" width="9.2" height="1.6" fill="#9a7430"/><rect x="159.0" y="33.4" width="14.5" height="3.8" fill="#e0a020"/><rect x="161.2" y="34.5" width="10.2" height="1.7" fill="#9a7430"/><rect x="167.8" y="26.1" width="13.1" height="3.2" fill="#e0a020"/><rect x="169.7" y="27.1" width="9.2" height="1.4" fill="#9a7430"/><rect x="154.0" y="46.5" width="14.5" height="4.4" fill="#e0a020"/><rect x="156.1" y="47.8" width="10.2" height="2.0" fill="#9a7430"/><rect x="160.5" y="50.8" width="16.0" height="4.6" fill="#e0a020"/><rect x="162.9" y="52.2" width="11.2" height="2.1" fill="#9a7430"/><rect x="167.0" y="56.6" width="17.4" height="5.5" fill="#e0a020"/><rect x="169.6" y="58.3" width="12.2" height="2.5" fill="#9a7430"/><rect x="176.5" y="62.5" width="18.9" height="6.5" fill="#e0a020"/><rect x="179.3" y="64.4" width="13.2" height="2.9" fill="#9a7430"/><rect x="189.5" y="71.2" width="6.5" height="7.3" fill="#e0a020"/><rect x="190.5" y="73.3" width="4.6" height="3.3" fill="#9a7430"/><rect x="192.4" y="46.5" width="3.6" height="4.4" fill="#e0a020"/><rect x="193.0" y="47.8" width="2.5" height="2.0" fill="#9a7430"/>
      <rect x="96" y="74" width="11" height="9" rx="1" fill="#222"/><rect x="96" y="82" width="11" height="2" fill="#3a5ad8"/>
      <g fill="#1e1e22"><rect x="76" y="46" width="6" height="4"/><rect x="102" y="31" width="5" height="4"/><rect x="138" y="44" width="6" height="4"/><rect x="170" y="45" width="6" height="4"/><rect x="0" y="48" width="6" height="4"/><rect x="0" y="60" width="8" height="4"/><rect x="130" y="50" width="6" height="5"/></g>
      <g fill="#fff" opacity=".35"><rect x="55" y="62" width="2" height="12"/><rect x="36" y="88" width="3" height="10"/><rect x="158" y="88" width="3" height="10"/><rect x="98" y="92" width="2" height="12"/></g>
    </svg>
  </div>
  <div class="t" style="left:549px;top:365px;font-size:17px;color:#111">规划决策</div>
</div>
<!-- chevron & cursor -->
<div class="a" style="left:1147px;top:394px;width:24px;height:60px;background:#5a585c;border-radius:6px 0 0 6px"></div>
<svg class="a" style="left:1154px;top:415px" width="12" height="18" viewBox="0 0 12 18"><path d="M2 1.5 L10 9 L2 16.5" stroke="#b0b0b0" stroke-width="1.6" fill="none"/></svg>
<svg class="a" style="left:1063px;top:446px" width="13" height="18" viewBox="0 0 13 18"><path d="M1 1 L1 14 L4 11 L6.5 16.5 L8.5 15.5 L6 10 L10.5 10Z" fill="#fff" stroke="#222" stroke-width="1"/></svg>

<!-- notes -->
<div class="a" style="left:127px;top:641px;width:1044px;height:1px;background:#cfcfcf"></div>
<div class="a" style="left:127px;top:642px;width:1044px;height:55px;background:#e6e6e6"></div>
<div class="t" style="left:137px;top:649px;font-size:13px;color:#555">单击此处添加备注</div>
<!-- status bar -->
<div class="a" style="left:1px;top:696px;width:1170px;height:20px;background:#f3f2f3;border-top:1px solid #c9c9c9"></div>
<div class="t" style="left:6px;top:700px;font-size:11px;color:#444">幻灯片 第 3 张，共 13 张</div><div class="t" style="left:140px;top:700px;font-size:11px;color:#444"><span style="display:inline-block;width:6px">“</span>包图主题2<span style="display:inline-block;width:6px">”</span></div>
<svg class="a" style="left:211px;top:699px" width="14" height="12" viewBox="0 0 14 12"><path d="M1 1 L6 1 L6 11 L1 11Z M7 1 L10 1 M7 11 L12 11 L12 6 M8 8 L13 2" stroke="#666" fill="none"/></svg>
<div class="t" style="left:236px;top:700px;font-size:11px;color:#444">中文(中国)</div>
<svg class="a" style="left:787px;top:700px" width="11" height="11" viewBox="0 0 11 11"><path d="M5.5 1 L3 4 L8 4Z" fill="#777"/><rect x="1" y="6" width="9" height="1" fill="#777"/><rect x="1" y="9" width="9" height="1" fill="#777"/></svg>
<div class="t" style="left:801px;top:700px;font-size:11.5px;color:#444">备注</div>
<svg class="a" style="left:836px;top:700px" width="12" height="12" viewBox="0 0 12 12"><path d="M0 0 L12 0 L12 8 L6 8 L3 11 L3 8 L0 8Z" fill="#666"/></svg>
<div class="t" style="left:851px;top:700px;font-size:11.5px;color:#444">批注</div>
<div class="a" style="left:886px;top:697px;width:27px;height:19px;background:#d5d5d5"></div>
<svg class="a" style="left:893px;top:700px" width="13" height="12" viewBox="0 0 13 12"><rect x="0.5" y="0.5" width="12" height="11" fill="none" stroke="#777"/><rect x="4.5" y="2.5" width="4" height="4" fill="none" stroke="#777"/><rect x="2" y="9" width="9" height="1" fill="#777"/></svg>
<svg class="a" style="left:921px;top:700px" width="13" height="12" viewBox="0 0 13 12"><rect x="0.5" y="0.5" width="5" height="4.5" fill="none" stroke="#777"/><rect x="7.5" y="0.5" width="5" height="4.5" fill="none" stroke="#777"/><rect x="0.5" y="6.5" width="5" height="4.5" fill="none" stroke="#777"/><rect x="7.5" y="6.5" width="5" height="4.5" fill="none" stroke="#777"/></svg>
<div class="t" style="left:1138px;top:699px;font-size:12px;color:#666">%</div>
<svg class="a" style="left:1155px;top:700px" width="12" height="12" viewBox="0 0 12 12"><rect x="0.5" y="0.5" width="11" height="11" fill="none" stroke="#888"/><path d="M3 3 L5 5 M9 3 L7 5 M3 9 L5 7 M9 9 L7 7" stroke="#888"/></svg>

<!-- ribbon content -->
<div class="a" style="left:1px;top:228px;width:1170px;height:1px;background:#d6d6d6"></div>
<!-- clipboard group -->
<svg class="a" style="left:10px;top:151px" width="26" height="30" viewBox="0 0 26 30"><rect x="0.5" y="4" width="18" height="22" fill="#e9c27a"/><rect x="5" y="1" width="9" height="5" rx="1" fill="#6b6b6b"/><rect x="3" y="4" width="13" height="2" fill="#6b6b6b"/><path d="M9 11 L19 11 L24.5 16.5 L24.5 29 L9 29Z" fill="#fff" stroke="#888" stroke-width="0.8"/></svg>
<div class="t" style="left:10px;top:183px;font-size:11px;color:#333">粘贴</div>
<svg class="a" style="left:19px;top:200px" width="6" height="4"><path d="M0 0 L6 0 L3 3.5Z" fill="#666"/></svg>
<svg class="a" style="left:41px;top:154px" width="13" height="12" viewBox="0 0 13 12"><circle cx="3" cy="9.5" r="2" stroke="#bbb" fill="none"/><circle cx="10" cy="9.5" r="2" stroke="#bbb" fill="none"/><path d="M4 8 L10 0.5 M9 8 L3 0.5" stroke="#bbb" stroke-width="1"/></svg>
<div class="t" style="left:57px;top:154px;font-size:11px;color:#aaa">剪切</div>
<svg class="a" style="left:41px;top:172px" width="13" height="14" viewBox="0 0 13 14"><path d="M1 1 L6 1 L6 9 L1 9Z M5 5 L10 5 L12 7 L12 13 L5 13Z" stroke="#bbb" fill="#f1f1f1"/></svg>
<div class="t" style="left:57px;top:174px;font-size:11px;color:#aaa">复制</div>
<div class="t" style="left:85px;top:172px;font-size:10px;color:#bbb">-</div>
<svg class="a" style="left:42px;top:192px" width="13" height="13" viewBox="0 0 13 13"><path d="M12 1 L6 7 L4 6 L1 11 L3 12 L7 9 L6 7" stroke="#c6c6c6" stroke-width="2" fill="none"/></svg>
<div class="t" style="left:57px;top:194px;font-size:11px;color:#aaa">格式刷</div>
<div class="t" style="left:25px;top:214px;font-size:11px;color:#555">剪贴板</div>
<svg class="a" style="left:86px;top:219px" width="6" height="6" viewBox="0 0 6 6"><path d="M0 0.5 L4 0.5 M0.5 0 L0.5 4 M1 1 L5.5 5.5 M5.5 3 L5.5 5.5 L3 5.5" stroke="#999" stroke-width="0.8" fill="none"/></svg>
<div class="a" style="left:97px;top:150px;width:1px;height:76px;background:#dadada"></div>
<!-- slides group -->
<svg class="a" style="left:106px;top:151px" width="30" height="28" viewBox="0 0 30 28"><rect x="4.5" y="4.5" width="25" height="23" rx="2" fill="#fff" stroke="#aaa"/><rect x="8" y="8" width="18" height="6" fill="#c8c8c8"/><rect x="8" y="17" width="18" height="1" fill="#999"/><rect x="8" y="21" width="18" height="1" fill="#999"/><path d="M4 0 L4 8 M0 4 L8 4 M1 1 L7 7 M7 1 L1 7" stroke="#f2c94c" stroke-width="1"/></svg>
<div class="t" style="left:109px;top:183px;font-size:11px;color:#333">新建</div>
<div class="t" style="left:100px;top:197px;font-size:11px;color:#333">幻灯片</div>
<svg class="a" style="left:136px;top:201px" width="6" height="4"><path d="M0 0 L6 0 L3 3.5Z" fill="#666"/></svg>
<svg class="a" style="left:145px;top:152px" width="15" height="12" viewBox="0 0 15 12"><rect x="0.5" y="0.5" width="14" height="11" fill="#fff" stroke="#777"/><rect x="2" y="2.5" width="11" height="1" fill="#777"/><rect x="2" y="5" width="5" height="5" fill="#bbb"/><rect x="8" y="5.5" width="5" height="1" fill="#777"/><rect x="8" y="8" width="5" height="1" fill="#777"/></svg>
<div class="t" style="left:162px;top:154px;font-size:11px;color:#333">版式</div>
<svg class="a" style="left:186px;top:157px" width="6" height="4"><path d="M0 0 L6 0 L3 3.5Z" fill="#666"/></svg>
<svg class="a" style="left:145px;top:171px" width="15" height="13" viewBox="0 0 15 13"><rect x="2.5" y="2.5" width="12" height="10" fill="#fff" stroke="#777"/><rect x="4" y="5" width="4" height="5" fill="#bbb"/><rect x="9" y="5.5" width="4" height="1" fill="#777"/><rect x="9" y="8" width="4" height="1" fill="#777"/><path d="M1 6 Q1 1 6 1 L8 1 M6 -1 L8 1 L6 3" stroke="#2b6cc4" stroke-width="1.3" fill="none"/></svg>
<div class="t" style="left:162px;top:174px;font-size:11px;color:#333">重置</div>
<svg class="a" style="left:145px;top:191px" width="15" height="13" viewBox="0 0 15 13"><rect x="4.5" y="3.5" width="9" height="9" fill="#fff" stroke="#777"/><rect x="6" y="7" width="6" height="1" fill="#777"/><rect x="0" y="1" width="7" height="1.5" fill="#f2c94c"/></svg>
<div class="t" style="left:162px;top:194px;font-size:11px;color:#333">节</div>
<svg class="a" style="left:175px;top:196px" width="6" height="4"><path d="M0 0 L6 0 L3 3.5Z" fill="#666"/></svg>
<div class="t" style="left:130px;top:214px;font-size:11px;color:#555">幻灯片</div>
<div class="a" style="left:197px;top:150px;width:1px;height:76px;background:#dadada"></div>
<!-- font group -->
<div class="a" style="left:200px;top:156px;width:79px;height:19px;background:#fff;border:1px solid #c6c6c6"></div>
<div class="a" style="left:268px;top:157px;width:10px;height:17px;background:#e6e6e6"></div>
<div class="a" style="left:279px;top:156px;width:42px;height:19px;background:#fff;border:1px solid #c6c6c6"></div>
<div class="a" style="left:311px;top:157px;width:9px;height:17px;background:#e6e6e6"></div>
<div class="t" style="left:323px;top:158px;font-size:15px;color:#9a9a9a">A</div>
<div class="t" style="left:333px;top:155px;font-size:7px;color:#9a9a9a">^</div>
<div class="t" style="left:342px;top:161px;font-size:11px;color:#9a9a9a">A</div>
<div class="t" style="left:350px;top:156px;font-size:7px;color:#9a9a9a">ˇ</div>
<div class="a" style="left:360px;top:158px;width:1px;height:14px;background:#d6d6d6"></div>
<div class="t" style="left:368px;top:158px;font-size:11px;color:#aaa">A</div>
<svg class="a" style="left:372px;top:163px" width="9" height="9"><path d="M1 8 L8 1" stroke="#c6c6c6" stroke-width="3"/></svg>
<div class="t" style="left:204px;top:184px;font-size:14px;font-weight:bold;color:#a6a6a6">B</div>
<div class="t" style="left:223px;top:184px;font-size:14px;font-style:italic;color:#a6a6a6;font-family:'Liberation Serif',serif">I</div>
<div class="t" style="left:240px;top:184px;font-size:14px;text-decoration:underline;color:#a6a6a6">U</div>
<div class="t" style="left:258px;top:184px;font-size:14px;font-weight:bold;color:#a6a6a6">S</div>
<div class="t" style="left:275px;top:188px;font-size:11px;color:#a6a6a6;letter-spacing:-0.5px;text-decoration:line-through">abc</div>
<div class="t" style="left:294px;top:184px;font-size:11px;color:#a6a6a6;text-decoration:underline">AV</div>
<div class="t" style="left:310px;top:186px;font-size:9px;color:#bbb">-</div>
<div class="t" style="left:319px;top:184px;font-size:14px;color:#a6a6a6">Aa</div>
<div class="t" style="left:338px;top:187px;font-size:9px;color:#bbb">-</div>
<div class="a" style="left:345px;top:184px;width:1px;height:14px;background:#d6d6d6"></div>
<div class="t" style="left:353px;top:183px;font-size:16px;color:#a6a6a6">A</div>
<div class="t" style="left:272px;top:214px;font-size:11px;color:#555">字体</div>
<svg class="a" style="left:373px;top:219px" width="6" height="6" viewBox="0 0 6 6"><path d="M0 0.5 L4 0.5 M0.5 0 L0.5 4 M1 1 L5.5 5.5" stroke="#bbb" stroke-width="0.8" fill="none"/></svg>
<div class="a" style="left:384px;top:150px;width:1px;height:76px;background:#dadada"></div>
<!-- paragraph group -->
<svg class="a" style="left:389px;top:157px" width="125" height="15" viewBox="0 0 125 15">
 <g fill="#b5b5b5"><circle cx="2" cy="2" r="1.5"/><circle cx="2" cy="7" r="1.5"/><circle cx="2" cy="12" r="1.5"/><rect x="5" y="1.5" width="9" height="1"/><rect x="5" y="6.5" width="9" height="1"/><rect x="5" y="11.5" width="9" height="1"/><path d="M18 6 L22 6 L20 8Z"/>
 <rect x="28" y="0.5" width="1.5" height="3"/><rect x="28" y="5.5" width="1.5" height="3"/><rect x="28" y="10.5" width="1.5" height="3"/><rect x="32" y="1.5" width="9" height="1"/><rect x="32" y="6.5" width="9" height="1"/><rect x="32" y="11.5" width="9" height="1"/><path d="M45 6 L49 6 L47 8Z"/>
 <rect x="53" y="0" width="1" height="15" fill="#d8d8d8"/>
 <rect x="60" y="1" width="13" height="1"/><rect x="66" y="5" width="7" height="1"/><rect x="66" y="9" width="7" height="1"/><rect x="60" y="13" width="13" height="1"/><path d="M60 7.5 L64 5 L64 10Z"/>
 <rect x="79" y="1" width="13" height="1"/><rect x="85" y="5" width="7" height="1"/><rect x="85" y="9" width="7" height="1"/><rect x="79" y="13" width="13" height="1"/><path d="M83 7.5 L79 5 L79 10Z"/>
 <rect x="97" y="0" width="1" height="15" fill="#d8d8d8"/>
 <rect x="104" y="2" width="1" height="11"/><path d="M101.5 3 L104.5 0 L107.5 3Z M101.5 12 L104.5 15 L107.5 12Z"/><rect x="109" y="2" width="8" height="1"/><rect x="109" y="7" width="8" height="1"/><rect x="109" y="12" width="8" height="1"/><path d="M120 6 L124 6 L122 8Z"/></g></svg>
<svg class="a" style="left:389px;top:185px" width="122" height="15" viewBox="0 0 122 15">
 <g fill="#b5b5b5"><rect x="1" y="1" width="12" height="1"/><rect x="1" y="4.5" width="12" height="1"/><rect x="1" y="8" width="12" height="1"/><rect x="1" y="11.5" width="12" height="1"/>
 <rect x="19" y="1" width="12" height="1"/><rect x="21" y="4.5" width="8" height="1"/><rect x="19" y="8" width="12" height="1"/><rect x="21" y="11.5" width="8" height="1"/>
 <rect x="38" y="1" width="12" height="1"/><rect x="42" y="4.5" width="8" height="1"/><rect x="38" y="8" width="12" height="1"/><rect x="42" y="11.5" width="8" height="1"/>
 <rect x="56" y="1" width="12" height="1"/><rect x="56" y="4.5" width="12" height="1"/><rect x="56" y="8" width="12" height="1"/><rect x="56" y="11.5" width="12" height="1"/>
 <rect x="74" y="0" width="1" height="14"/><rect x="85" y="0" width="1" height="14"/><rect x="77" y="2" width="6" height="1"/><rect x="77" y="6" width="6" height="1"/><rect x="77" y="10" width="6" height="1"/>
 <rect x="92" y="0" width="1" height="15" fill="#d8d8d8"/>
 <rect x="98" y="1" width="12" height="1"/><rect x="98" y="4.5" width="12" height="1"/><rect x="98" y="8" width="12" height="1"/><rect x="98" y="11.5" width="12" height="1"/><path d="M114 6 L118 6 L116 8Z"/></g></svg>
<svg class="a" style="left:518px;top:153px" width="15" height="14" viewBox="0 0 15 14"><g fill="#aaa"><rect x="1" y="1" width="1" height="11"/><rect x="4" y="1" width="1" height="11"/><path d="M8 10 L10 2 L12 10 M9 7 L11 7" stroke="#aaa" fill="none"/><rect x="0" y="12.5" width="15" height="1"/></g></svg>
<div class="t" style="left:534px;top:155px;font-size:11px;color:#aaa">文字方向</div>
<div class="t" style="left:582px;top:155px;font-size:8px;color:#bbb">-</div>
<svg class="a" style="left:518px;top:172px" width="15" height="14" viewBox="0 0 15 14"><rect x="0.5" y="1.5" width="14" height="11" fill="none" stroke="#bbb" stroke-dasharray="2 1"/><path d="M7.5 2 L7.5 12 M5.5 4 L7.5 2 L9.5 4 M5.5 10 L7.5 12 L9.5 10" stroke="#aaa" fill="none"/></svg>
<div class="t" style="left:534px;top:174px;font-size:11px;color:#aaa">对齐文本</div>
<div class="t" style="left:582px;top:175px;font-size:8px;color:#bbb">-</div>
<svg class="a" style="left:518px;top:192px" width="15" height="13" viewBox="0 0 15 13"><path d="M0 1 L7 1 L9 4 L2 4Z" fill="#aaa"/><rect x="5.5" y="5.5" width="9" height="7" fill="none" stroke="#bbb"/><rect x="7" y="8.5" width="6" height="1" fill="#bbb"/></svg>
<div class="t" style="left:534px;top:194px;font-size:11px;color:#aaa">转换为 SmartArt</div>
<div class="t" style="left:621px;top:195px;font-size:8px;color:#bbb">-</div>
<div class="t" style="left:490px;top:214px;font-size:11px;color:#555">段落</div>
<svg class="a" style="left:620px;top:219px" width="6" height="6" viewBox="0 0 6 6"><path d="M0 0.5 L4 0.5 M0.5 0 L0.5 4 M1 1 L5.5 5.5" stroke="#bbb" stroke-width="0.8" fill="none"/></svg>
<div class="a" style="left:631px;top:150px;width:1px;height:76px;background:#dadada"></div>
<!-- drawing group -->
<div class="a" style="left:635px;top:150px;width:125px;height:57px;background:#fff;border:1px solid #c6c6c6"></div>
<div class="a" style="left:747px;top:151px;width:12px;height:17px;background:#e6e6e6"></div>
<div class="a" style="left:747px;top:168px;width:12px;height:1px;background:#d0d0d0"></div>
<div class="a" style="left:747px;top:187px;width:12px;height:1px;background:#d0d0d0"></div>
<div class="a" style="left:746px;top:151px;width:1px;height:55px;background:#d0d0d0"></div>
<svg class="a" style="left:636px;top:151px" width="110" height="55" viewBox="0 0 110 55">
 <g stroke="#666" fill="none" stroke-width="0.9">
 <rect x="2.5" y="3.5" width="13" height="11"/><rect x="20.5" y="3.5" width="13" height="11"/>
 <path d="M39 3 L50 14"/><path d="M57 3 L68 14 M64 14 L68 14 L68 10"/>
 <rect x="75.5" y="4.5" width="13" height="9"/><ellipse cx="100" cy="9" rx="7" ry="5"/>
 <rect x="2.5" y="22.5" width="13" height="10" rx="3"/><path d="M21 33 L27 21 L33 33Z"/><path d="M39 22 L44 22 L44 33 L51 33"/><path d="M57 22 L62 22 L62 32 L69 32 M66 29 L69 32 L66 35"/><path d="M75 25 L82 25 L82 21 L89 28 L82 35 L82 31 L75 31Z"/><path d="M97 21 L103 21 L103 28 L107 28 L100 35 L93 28 L97 28Z"/>
 <path d="M3 51 L3 43 Q6 39 11 40 L13 44 L9 46 L15 47 L15 51Z"/><path d="M26 39 Q22 41 26 44 Q30 47 24 50 L28 53"/><path d="M39 40 Q48 40 51 52"/><path d="M57 50 Q60 39 63 42 Q66 52 70 51"/><path d="M82 39 Q80 39 80 43 Q80 46 78 46 Q80 46 80 49 Q80 52 82 52"/><path d="M97 39 Q99 39 99 43 Q99 46 101 46 Q99 46 99 49 Q99 52 97 52"/>
 </g>
 <g fill="#2b56a8"><rect x="5" y="5" width="4" height="3"/><rect x="26" y="5" width="4" height="3"/></g>
 <g fill="#888"><rect x="4" y="10" width="10" height="1"/><rect x="10" y="6" width="4" height="1"/><rect x="22" y="10" width="10" height="1"/><rect x="22" y="5" width="1" height="8"/></g>
</svg>
<svg class="a" style="left:748px;top:152px" width="10" height="52" viewBox="0 0 10 52"><path d="M3 9 L7 9 L5 7Z" fill="#c6c6c6"/><path d="M2.5 26 L7.5 26 L5 29Z" fill="#555"/><rect x="2.5" y="40" width="5" height="1" fill="#555"/><path d="M2.5 42 L7.5 42 L5 45Z" fill="#555"/></svg>
<svg class="a" style="left:766px;top:152px" width="27" height="26" viewBox="0 0 27 26"><rect x="0.5" y="0.5" width="12" height="12" fill="#fff" stroke="#666"/><rect x="8" y="6" width="8" height="6" fill="#e6c06a"/><rect x="3" y="13" width="8" height="8" fill="#e6c06a"/><rect x="12.5" y="12.5" width="12" height="12" fill="#fff" stroke="#999"/></svg>
<div class="t" style="left:767px;top:183px;font-size:11px;color:#333">排列</div>
<svg class="a" style="left:776px;top:200px" width="6" height="4"><path d="M0 0 L6 0 L3 3.5Z" fill="#666"/></svg>
<svg class="a" style="left:806px;top:152px" width="30" height="28" viewBox="0 0 30 28"><rect x="1" y="1" width="24" height="22" rx="5" fill="#f4f4f4" stroke="#d0d0d0"/><path d="M28 6 L14 22 L10 26 L12 20 Z" fill="#c8c8c8"/></svg>
<div class="t" style="left:797px;top:183px;font-size:11px;color:#aaa">快速样式</div>
<svg class="a" style="left:850px;top:152px" width="11" height="13" viewBox="0 0 11 13"><path d="M2 6 L6 2 L10 6 L6 11Z M3 3 Q2 0 5 1" stroke="#bbb" fill="none"/></svg>
<div class="t" style="left:862px;top:154px;font-size:11px;color:#aaa">形状填充</div>
<div class="t" style="left:908px;top:155px;font-size:8px;color:#ccc">-</div>
<svg class="a" style="left:845px;top:170px" width="14" height="13" viewBox="0 0 14 13"><path d="M1 1 L9 1 M1 1 L1 12 L11 12 L11 8 M5 9 L13 1" stroke="#bbb" fill="none"/></svg>
<div class="t" style="left:862px;top:173px;font-size:11px;color:#aaa">形状轮廓</div>
<div class="t" style="left:908px;top:174px;font-size:8px;color:#ccc">-</div>
<svg class="a" style="left:845px;top:189px" width="14" height="13" viewBox="0 0 14 13"><path d="M2 5 Q3 1 8 1 L13 2 L13 8 Q11 12 6 12 L1 11Z" fill="#ddd" stroke="#bbb"/></svg>
<div class="t" style="left:862px;top:192px;font-size:11px;color:#aaa">形状效果</div>
<div class="t" style="left:908px;top:193px;font-size:8px;color:#ccc">-</div>
<div class="t" style="left:757px;top:214px;font-size:11px;color:#555">绘图</div>
<svg class="a" style="left:910px;top:219px" width="6" height="6" viewBox="0 0 6 6"><path d="M0 0.5 L4 0.5 M0.5 0 L0.5 4 M1 1 L5.5 5.5" stroke="#bbb" stroke-width="0.8" fill="none"/></svg>
<div class="a" style="left:920px;top:150px;width:1px;height:76px;background:#dadada"></div>
<!-- editing group -->
<svg class="a" style="left:926px;top:152px" width="13" height="13" viewBox="0 0 13 13"><circle cx="8" cy="5" r="3.8" stroke="#2b6cc4" stroke-width="1.6" fill="none"/><path d="M5.5 7.5 L1 12" stroke="#2b6cc4" stroke-width="2"/></svg>
<div class="t" style="left:941px;top:153px;font-size:11px;color:#333">查找</div>
<svg class="a" style="left:925px;top:169px" width="14" height="16" viewBox="0 0 14 16"><text x="0" y="7" font-size="7" fill="#444" font-family="Liberation Sans">ab</text><text x="4" y="15" font-size="7" fill="#444" font-family="Liberation Sans">ac</text><path d="M0 11 L4 11 M1.5 9.5 L0 11 L1.5 12.5" stroke="#2b6cc4" fill="none"/></svg>
<div class="t" style="left:941px;top:172px;font-size:11px;color:#333">替换</div>
<svg class="a" style="left:969px;top:176px" width="6" height="4"><path d="M0 0 L5 0 L2.5 3Z" fill="#555"/></svg>
<svg class="a" style="left:927px;top:189px" width="11" height="15" viewBox="0 0 11 15"><path d="M1 1 L1 12 L4 9.5 L6.5 14 L8 13 L5.8 9 L9.5 9Z" stroke="#444" fill="#fff"/></svg>
<div class="t" style="left:941px;top:190px;font-size:11px;color:#333">选择</div>
<svg class="a" style="left:965px;top:194px" width="6" height="4"><path d="M0 0 L5 0 L2.5 3Z" fill="#555"/></svg>
<div class="t" style="left:938px;top:214px;font-size:11px;color:#555">编辑</div>
<div class="a" style="left:979px;top:150px;width:1px;height:76px;background:#dadada"></div>
<svg class="a" style="left:1154px;top:216px" width="11" height="7" viewBox="0 0 11 7"><path d="M1 6 L5.5 1.5 L10 6" stroke="#555" stroke-width="1.5" fill="none"/></svg>

<!-- taskbar -->
<div class="a" style="left:1px;top:716px;width:1170px;height:37px;background:linear-gradient(90deg,#1d3944 0px,#203541 500px,#203242 750px,#1f2b40 950px,#1f2a40 1170px)"></div>
<div class="a" style="left:1px;top:716px;width:44px;height:37px;background:#1c3b44"></div>
<div class="a" style="left:45px;top:716px;width:313px;height:37px;background:#f0f0f0"></div>
<svg class="a" style="left:57px;top:726px" width="14" height="16" viewBox="0 0 14 16"><circle cx="8.5" cy="5.5" r="4.5" stroke="#222" stroke-width="1.3" fill="none"/><path d="M5.5 9 L1 14.5" stroke="#222" stroke-width="1.5"/></svg>
<div class="t" style="left:80px;top:727px;font-size:15px;color:#222">在这里输入你要搜索的内容</div>
<svg class="a" style="left:372px;top:726px" width="18" height="18" viewBox="0 0 18 18"><circle cx="9" cy="9" r="6.8" stroke="#fff" stroke-width="2" fill="none"/></svg>
<svg class="a" style="left:417px;top:726px" width="16" height="17" viewBox="0 0 16 17"><rect x="1.5" y="3.5" width="8" height="9" stroke="#fff" stroke-width="1.3" fill="none"/><rect x="0" y="0" width="11" height="1.2" fill="#fff"/><rect x="0" y="15.5" width="11" height="1.2" fill="#fff"/><rect x="13" y="0" width="1.3" height="17" fill="#fff"/></svg>
<svg class="a" style="left:461px;top:723px" width="22" height="22" viewBox="0 0 22 22"><circle cx="11" cy="11" r="9" fill="#4caf50"/><circle cx="11" cy="11" r="9" fill="url(#ieg)"/><defs><radialGradient id="ieg"><stop offset="0" stop-color="#a5e06a"/><stop offset="1" stop-color="#3a9a2a"/></radialGradient></defs><rect x="5" y="10" width="12" height="2.5" fill="#fff"/><path d="M16.5 13.5 Q14 17 11 17 Q6 17 5 11 Q6 5 11 5 Q16 5 17 10" stroke="#fff" stroke-width="2.3" fill="none"/><path d="M2 19 Q0 14 8 8 Q16 1 21 2" stroke="#3aa82a" stroke-width="1.5" fill="none"/></svg>
<svg class="a" style="left:507px;top:726px" width="21" height="18" viewBox="0 0 21 18"><path d="M0 1 L7 1 L9 3 L21 3 L21 17 L0 17Z" fill="#e8b43a"/><rect x="0" y="5" width="21" height="12" fill="#f6cf55"/><rect x="5" y="10" width="11" height="7" fill="#2a7ad6"/><rect x="8" y="12" width="5" height="5" fill="#f6cf55"/></svg>
<div class="a" style="left:541px;top:716px;width:45px;height:37px;background:#3d4f5c"></div>
<svg class="a" style="left:553px;top:725px" width="22" height="20" viewBox="0 0 22 20"><rect x="8" y="1" width="13" height="18" fill="#fff" stroke="#ccc" stroke-width="0.5"/><rect x="11" y="5" width="7" height="1.2" fill="#d24726"/><rect x="11" y="8" width="7" height="1.2" fill="#d24726"/><rect x="11" y="11" width="7" height="1.2" fill="#d24726"/><rect x="0" y="2" width="13" height="16" fill="#d24726"/><text x="2.5" y="14.5" font-size="11" font-weight="bold" fill="#fff" font-family="Liberation Sans">P</text></svg>
<svg class="a" style="left:598px;top:724px" width="22" height="22" viewBox="0 0 22 22"><rect width="22" height="22" fill="#1670ff"/><path d="M3 14 L7 8 L10 12 L13 8 L17 14 L14 14 L13 12 L10 15 L7 12 L6 14Z" fill="#fff"/><path d="M11 9 L14 6 L19 14 L16 14Z" fill="#bcd6ff"/></svg>
<div class="a" style="left:500px;top:750px;width:37px;height:2px;background:#76b9ed"></div>
<div class="a" style="left:541px;top:750px;width:45px;height:2px;background:#76b9ed"></div>
<div class="a" style="left:591px;top:750px;width:37px;height:2px;background:#76b9ed"></div>
<!-- tray -->
<svg class="a" style="left:895px;top:730px" width="12" height="8" viewBox="0 0 12 8"><path d="M1 7 L6 2 L11 7" stroke="#fff" stroke-width="1.3" fill="none"/></svg>
<svg class="a" style="left:916px;top:726px" width="12" height="18" viewBox="0 0 12 18"><rect x="2.5" y="0" width="7" height="13" rx="2" fill="#ddd"/><rect x="5.5" y="13" width="1" height="3" fill="#ddd"/><rect x="2" y="16" width="8" height="1.2" fill="#ddd"/></svg>
<svg class="a" style="left:939px;top:729px" width="14" height="14" viewBox="0 0 14 14"><path d="M1 13 Q1 1 13 1 M4 13 Q4 4 13 4 M7 13 Q7 7 13 7" stroke="#ccc" stroke-width="1" fill="none"/><circle cx="12" cy="12" r="1.3" fill="#fff"/></svg>
<svg class="a" style="left:958px;top:731px" width="17" height="10" viewBox="0 0 17 10"><rect x="0.5" y="0.5" width="14" height="9" stroke="#ddd" fill="#eee"/><rect x="15" y="3" width="2" height="4" fill="#ddd"/></svg>
<svg class="a" style="left:980px;top:727px" width="16" height="15" viewBox="0 0 16 15"><path d="M1 5 L4 5 L8 1 L8 14 L4 10 L1 10Z" stroke="#ddd" fill="none"/><path d="M10 5 Q12 7.5 10 10 M12 3 Q15 7.5 12 12" stroke="#aaa" fill="none"/></svg>
<div class="t" style="left:1001px;top:727px;font-size:14px;color:#fff">中</div>
<svg class="a" style="left:1027px;top:726px" width="17" height="16" viewBox="0 0 17 16"><rect x="1.5" y="1.5" width="14" height="13" rx="2" fill="#ef5a2a" transform="rotate(-12 8.5 8)"/><text x="4" y="13" font-size="12" font-weight="bold" fill="#fff" font-family="Liberation Sans">S</text></svg>
<div class="t" style="left:1072px;top:721px;font-size:12px;color:#fff">15:06</div>
<div class="t" style="left:1059px;top:738px;font-size:12px;color:#fff">2020/9/30</div>
<svg class="a" style="left:1132px;top:727px" width="17" height="18" viewBox="0 0 17 18"><path d="M1 1 L16 1 L16 13 L9 13 L5 17 L5 13 L1 13Z" fill="#eee"/><rect x="4" y="4" width="9" height="1" fill="#555"/><rect x="4" y="7" width="9" height="1" fill="#555"/><circle cx="13" cy="13" r="3" fill="#eee" stroke="#333" stroke-width="0.8"/></svg>
<div class="a" style="left:1166px;top:716px;width:1px;height:37px;background:#5a7aa6"></div>
<!-- sogou bar -->
<div class="a" style="left:950px;top:693px;width:189px;height:24px;background:#fff;border:1px solid #cfd6e0"></div>
<svg class="a" style="left:947px;top:690px" width="29" height="28" viewBox="0 0 29 28"><rect x="3" y="3" width="23" height="22" rx="3" fill="#ef5a2a" transform="rotate(-14 14.5 14)"/><path d="M20 9 Q16 6 11 8 Q7 11 11 14 L17 15 Q21 18 16 21 Q11 22 8 19" stroke="#fff" stroke-width="3.2" fill="none"/></svg>
<div class="t" style="left:979px;top:696px;font-size:17px;font-weight:bold;color:#1f76d2">中</div>
<svg class="a" style="left:1001px;top:698px" width="13" height="14" viewBox="0 0 13 14"><circle cx="3" cy="4" r="2" stroke="#1f76d2" stroke-width="1.4" fill="none"/><path d="M10 7 Q12 8 10.5 11.5 L9 13" stroke="#1f76d2" stroke-width="2" fill="none"/><circle cx="10" cy="7.5" r="1.8" fill="#1f76d2"/></svg>
<svg class="a" style="left:1019px;top:697px" width="16" height="16" viewBox="0 0 16 16"><circle cx="8" cy="8" r="6.8" stroke="#1f76d2" stroke-width="1.6" fill="none"/><circle cx="5.5" cy="6" r="1" fill="#1f76d2"/><circle cx="10.5" cy="6" r="1" fill="#1f76d2"/><path d="M4.5 9.5 Q8 13 11.5 9.5" stroke="#1f76d2" stroke-width="1.4" fill="none"/></svg>
<svg class="a" style="left:1041px;top:696px" width="13" height="18" viewBox="0 0 13 18"><rect x="3.5" y="0" width="6" height="11" rx="3" fill="#1f76d2"/><path d="M1 7.5 Q1 13.5 6.5 13.5 Q12 13.5 12 7.5" stroke="#1f76d2" stroke-width="1.5" fill="none"/><rect x="5.8" y="13" width="1.4" height="3.5" fill="#1f76d2"/><rect x="3" y="16.5" width="7" height="1.3" fill="#1f76d2"/></svg>
<svg class="a" style="left:1059px;top:699px" width="16" height="12" viewBox="0 0 16 12"><rect x="0.8" y="0.8" width="14.4" height="10.4" rx="1.5" stroke="#1f76d2" stroke-width="1.6" fill="none"/><g fill="#1f76d2"><rect x="3" y="3" width="2" height="1.5"/><rect x="6" y="3" width="2" height="1.5"/><rect x="9" y="3" width="2" height="1.5"/><rect x="12" y="3" width="1.5" height="1.5"/><rect x="3" y="5.5" width="2" height="1.5"/><rect x="6" y="5.5" width="2" height="1.5"/><rect x="9" y="5.5" width="2" height="1.5"/><rect x="4" y="8" width="8" height="1.3"/></g></svg>
<svg class="a" style="left:1081px;top:697px" width="14" height="16" viewBox="0 0 14 16"><circle cx="6" cy="4" r="3" fill="#c8c8c8"/><path d="M0 14 Q0 8 6 8 Q10 8 11 10 L11 14Z" fill="#c8c8c8"/><rect x="7.5" y="9.5" width="6" height="6" fill="#fff" stroke="#aaa"/></svg>
<svg class="a" style="left:1100px;top:697px" width="15" height="15" viewBox="0 0 15 15"><path d="M4.5 1 L1 3 L0 7 L3 7.5 L3 14 L12 14 L12 7.5 L15 7 L14 3 L10.5 1 Q7.5 3.5 4.5 1Z" fill="#1f76d2"/></svg>
<svg class="a" style="left:1120px;top:697px" width="15" height="15" viewBox="0 0 15 15"><rect x="0" y="0" width="6.5" height="6.5" fill="#1f76d2"/><rect x="8.5" y="0.5" width="5.5" height="5.5" stroke="#1f76d2" fill="none"/><rect x="0" y="8.5" width="6.5" height="6.5" fill="#1f76d2"/><rect x="8.5" y="8.5" width="6.5" height="6.5" fill="#1f76d2"/></svg>
<!-- floating meeting toolbar overlay -->
<div class="a" style="left:19px;top:717px;width:127px;height:46px;border-radius:23px;background:rgba(20,20,20,.45)"></div>
<svg class="a" style="left:15px;top:727px" width="16" height="16" viewBox="0 0 16 16"><g fill="#fff"><path d="M0 2.2 L6.5 1.3 L6.5 7.3 L0 7.3Z"/><path d="M7.5 1.1 L16 0 L16 7.3 L7.5 7.3Z"/><path d="M0 8.3 L6.5 8.3 L6.5 14.3 L0 13.4Z"/><path d="M7.5 8.3 L16 8.3 L16 15.6 L7.5 14.5Z"/></g></svg>
<svg class="a" style="left:32px;top:727px" width="26" height="26" viewBox="0 0 26 26"><circle cx="13" cy="13" r="12" fill="#bdbdbd" opacity=".85"/><circle cx="9" cy="10" r="1.5" fill="#333"/><circle cx="17" cy="10" r="1.5" fill="#333"/><path d="M6 14 Q13 22 20 14Z" fill="#333"/></svg>
<svg class="a" style="left:69px;top:729px" width="22" height="22" viewBox="0 0 22 22"><path d="M1 5 Q1 2 4 2 L18 2 Q21 2 21 5 L21 14 Q21 17 18 17 L9 17 L4 21 L4 17 Q1 17 1 14Z" fill="#9a9a9a" opacity=".8"/><circle cx="7" cy="9.5" r="1.3" fill="#eee"/><circle cx="11" cy="9.5" r="1.3" fill="#eee"/></svg>
<div class="a" style="left:103px;top:727px;width:1px;height:26px;background:rgba(255,255,255,.35)"></div>
<svg class="a" style="left:113px;top:733px" width="8" height="12" viewBox="0 0 8 12"><path d="M7 1 L2 6 L7 11" stroke="#888" stroke-width="1.3" fill="none"/></svg>

<div class="a" style="left:0;top:0;width:1px;height:785px;background:#ebebeb"></div>
<!-- right panel -->
<div class="a" style="left:1171px;top:16px;width:252px;height:769px;background:linear-gradient(90deg,#3c3f44 0px,#2b2d31 60px,#202124 160px,#17181a 252px);overflow:hidden">
  <div class="a" style="left:0;top:0;width:4px;height:769px;background:#0d0d0e"></div>
  <div class="a" style="left:0;top:0;width:252px;height:40px;background:linear-gradient(180deg,#111214,rgba(17,18,20,0))"></div>
  <svg class="a" style="left:118px;top:16px" width="28" height="18" viewBox="0 0 28 18"><path d="M14 1 L27 17 L1 17 Z" fill="#8d8d8d" stroke="#8d8d8d" stroke-linejoin="round" stroke-width="1.5"/></svg>
</div>
<!-- tiles -->
<div class="a" style="left:1183px;top:59px;width:240px;height:136px;border:1px solid #1fa35a;border-radius:4px;background:linear-gradient(180deg,#151618,#1c1d20);overflow:hidden">
  <div class="a" style="left:83px;top:19px;width:75px;height:75px;border-radius:50%;background:linear-gradient(180deg,#7a7a7a,#a8a8a8)"></div>
  <svg class="a" style="left:83px;top:19px" width="75" height="75" viewBox="0 0 75 75"><defs><clipPath id="c1"><circle cx="37.5" cy="37.5" r="37.5"/></clipPath></defs><path clip-path="url(#c1)" d="M25 64 Q26 58 33 56 L33 50 Q26 44 24 36 Q22 32 24 30 Q23 18 30 14 Q37 10 45 13 Q51 17 50 30 Q52 32 50 36 Q48 44 42 50 L42 56 Q49 58 50 64 Q40 70 25 64Z M6 76 L12 69 Q20 60 33 58 L42 58 Q55 60 63 69 L69 76 Z" fill="#6f6f6f"/></svg>
  <div class="a" style="left:174px;top:1px;width:70px;height:54px;background:#3a3c40"></div>
  <div class="t" style="left:192px;top:19px;font-size:18px;color:#fff">正在讲</div>
  <div class="a" style="left:2px;top:102px;width:196px;height:30px;background:#0b0b0c"></div>
  <svg class="a" style="left:4px;top:107px" width="22" height="20" viewBox="0 0 22 20"><rect x="0.5" y="0.5" width="21" height="14" rx="2" fill="#e8e8e8"/><path d="M6 11 Q7 6 13 5.5 L13 3 L17 7 L13 10.5 L13 8 Q9 8 6 11Z" fill="#222"/><path d="M6 19.5 Q6 16 11 16 Q16 16 16 19.5Z" fill="#e8e8e8"/></svg>
  <svg class="a" style="left:36px;top:106px" width="20" height="22" viewBox="0 0 20 22"><rect x="5.5" y="0.5" width="9" height="13" rx="4.5" fill="#e8e8e8"/><path d="M2 9.5 Q2 17 10 17 Q18 17 18 9.5" stroke="#e8e8e8" stroke-width="2" fill="none"/><rect x="9" y="16.5" width="2" height="4" fill="#e8e8e8"/><rect x="6" y="19.5" width="8" height="2" rx="1" fill="#e8e8e8"/></svg>
  <div class="t" style="left:65px;top:110px;font-size:16px;color:#fff">王雷敏的屏幕共享</div>
</div>
<div class="a" style="left:1184px;top:207px;width:239px;height:135px;border:1px solid #46484c;border-radius:4px;background:#222326;overflow:hidden">
  <svg class="a" style="left:82px;top:19px" width="76" height="76" viewBox="0 0 76 76"><defs><clipPath id="c2"><circle cx="38" cy="38" r="37.5"/></clipPath></defs><circle cx="38" cy="38" r="37.5" fill="#f5d8d0"/><g clip-path="url(#c2)"><path d="M13 65 Q16 54 30 50 L46 50 Q60 54 63 65Z" fill="#8fb0e0"/><path d="M22 60 L28 58 M44 56 L52 60 M30 62 L36 60" stroke="#fff" stroke-width="1.5"/><path d="M38 50 L34 64" stroke="#c0392b" stroke-width="1"/><rect x="33" y="42" width="10" height="9" fill="#f6e3dc"/><path d="M33 48 Q38 52 43 48 L44 51 Q38 55 32 51Z" fill="#7fa2d6"/><ellipse cx="38" cy="31" rx="12" ry="14" fill="#fbe7e0"/><path d="M23 38 Q19 12 38 10 Q57 12 53 38 Q52 44 49 46 Q50 30 44 22 Q38 26 27 27 Q25 36 27 46 Q24 44 23 38Z" fill="#3b2a22"/><circle cx="32.5" cy="31" r="2" fill="#111"/><circle cx="43.5" cy="31" r="2" fill="#111"/><circle cx="28.5" cy="36" r="3" fill="#f4a0a0" opacity=".7"/><circle cx="47.5" cy="36" r="3" fill="#f4a0a0" opacity=".7"/><path d="M34 38 Q38 41 42 38" stroke="#333" stroke-width="1" fill="none"/><circle cx="24" cy="36" r="1" fill="#d4a030"/><circle cx="52" cy="36" r="1" fill="#d4a030"/></g></svg>
  <div class="a" style="left:3px;top:102px;width:107px;height:30px;background:#0b0b0c"></div>
  <svg class="a" style="left:3px;top:102px" width="30" height="30" viewBox="0 0 30 30"><rect width="30" height="30" fill="#ff8a1f"/><circle cx="15" cy="10.5" r="4.8" fill="#fff"/><path d="M5 24.5 Q5 16 15 16 Q25 16 25 24.5 Z" fill="#fff"/></svg>
  <svg class="a" style="left:44px;top:107px" width="20" height="21" viewBox="0 0 20 21"><rect x="5.5" y="0" width="9" height="14" rx="4.5" fill="#fff"/><path d="M1.8 9.5 Q1.8 17 10 17 Q18.2 17 18.2 9.5" stroke="#fff" stroke-width="1.8" fill="none"/><rect x="9" y="16.5" width="2" height="3.5" fill="#fff"/><path d="M1.5 19.5 L18.5 2.5" stroke="#222" stroke-width="3"/><path d="M1.5 19.5 L18.5 2.5" stroke="#e0463b" stroke-width="1.6"/></svg>
  <div class="t" style="left:72px;top:109px;font-size:16px;color:#fff">孙静</div>
  
</div>
<div class="a" style="left:1184px;top:355px;width:239px;height:135px;border:1px solid #46484c;border-radius:4px;background:#222326;overflow:hidden">
  <svg class="a" style="left:82px;top:18px" width="76" height="76" viewBox="0 0 76 76"><defs><clipPath id="c3"><circle cx="38" cy="38" r="37.5"/></clipPath></defs><g clip-path="url(#c3)"><rect width="76" height="76" fill="#c4e6e6"/><rect x="0" y="0" width="76" height="20" fill="#d8f0ee"/><rect x="30" y="12" width="22" height="34" fill="none" stroke="#9ccfd2" stroke-width="2"/><rect x="60" y="10" width="4" height="60" fill="#a8d8da"/>
<path d="M10 76 L12 50 Q16 38 28 36 L36 37 Q44 40 45 52 L44 76Z" fill="#c83a48"/>
<g fill="#f0f0f0"><rect x="12" y="52" width="32" height="2.5"/><rect x="12" y="57" width="32" height="2.5"/><rect x="12" y="62" width="32" height="2.5"/></g>
<path d="M16 40 Q24 35 36 37 Q42 40 42 48 L30 50 Q20 50 16 46Z" fill="#24305a"/>
<path d="M10 68 L44 68 L44 76 L10 76Z" fill="#6a7a50"/>
<ellipse cx="29" cy="26" rx="8" ry="9.5" fill="#f2cdb6"/>
<path d="M21 23 Q21 15 29 15 Q37 15 37 23 Q30 19 21 23Z" fill="#1e1e1e"/>
<path d="M38 76 L39 52 Q43 44 53 44 Q64 46 66 58 L66 76Z" fill="#efe7cc"/>
<ellipse cx="54" cy="38" rx="7" ry="7.5" fill="#f4d6c4"/>
<path d="M43 34 Q45 25 54 25 Q63 25 65 34 Q54 30 43 34Z" fill="#d6b28a"/>
<path d="M42 70 Q50 64 58 70" stroke="#c8a878" stroke-width="2" fill="none"/>
</g></svg>
  <div class="a" style="left:3px;top:102px;width:123px;height:30px;background:#0b0b0c"></div>
  <svg class="a" style="left:3px;top:102px" width="30" height="30" viewBox="0 0 30 30"><rect width="30" height="30" fill="#0a6cff"/><circle cx="15" cy="10.5" r="4.8" fill="#fff"/><path d="M5 24.5 Q5 16 15 16 Q25 16 25 24.5 Z" fill="#fff"/></svg>
  <svg class="a" style="left:44px;top:107px" width="20" height="21" viewBox="0 0 20 21"><rect x="5.5" y="0" width="9" height="14" rx="4.5" fill="#fff"/><path d="M1.8 9.5 Q1.8 17 10 17 Q18.2 17 18.2 9.5" stroke="#fff" stroke-width="1.8" fill="none"/><rect x="9" y="16.5" width="2" height="3.5" fill="#fff"/><path d="M1.5 19.5 L18.5 2.5" stroke="#222" stroke-width="3"/><path d="M1.5 19.5 L18.5 2.5" stroke="#e0463b" stroke-width="1.6"/></svg>
  <div class="t" style="left:72px;top:109px;font-size:16px;color:#fff">董凯锋</div>
  
</div>
<div class="a" style="left:1184px;top:504px;width:239px;height:135px;border:1px solid #46484c;border-radius:4px;background:#222326;overflow:hidden">
  <div class="a" style="left:82px;top:18px;width:75px;height:75px;border-radius:50%;background:#0a6cff"></div><div class="t" style="left:92px;top:43px;font-size:27px;color:#fff;letter-spacing:-1px">兰华</div>
  <div class="a" style="left:3px;top:102px;width:178px;height:30px;background:#0b0b0c"></div>
  <svg class="a" style="left:3px;top:102px" width="30" height="30" viewBox="0 0 30 30"><rect width="30" height="30" fill="#0a6cff"/><circle cx="15" cy="10.5" r="4.8" fill="#fff"/><path d="M5 24.5 Q5 16 15 16 Q25 16 25 24.5 Z" fill="#fff"/></svg>
  <svg class="a" style="left:44px;top:107px" width="20" height="21" viewBox="0 0 20 21"><rect x="5.5" y="0" width="9" height="14" rx="4.5" fill="#fff"/><path d="M1.8 9.5 Q1.8 17 10 17 Q18.2 17 18.2 9.5" stroke="#fff" stroke-width="1.8" fill="none"/><rect x="9" y="16.5" width="2" height="3.5" fill="#fff"/><path d="M1.5 19.5 L18.5 2.5" stroke="#222" stroke-width="3"/><path d="M1.5 19.5 L18.5 2.5" stroke="#e0463b" stroke-width="1.6"/></svg>
  <div class="t" style="left:72px;top:109px;font-size:16px;color:#fff">自动化-黄兰华</div>
  <div class="a" style="left:210px;top:116px;width:4px;height:8px;background:#f08a1c;border-radius:1px"></div><div class="a" style="left:216px;top:112px;width:4px;height:12px;background:#f08a1c;border-radius:1px"></div><div class="a" style="left:222px;top:107px;width:4px;height:17px;background:#d0d0d0;border-radius:1px"></div>
</div>
<div class="a" style="left:1184px;top:652px;width:239px;height:140px;border:1px solid #46484c;border-radius:4px;background:linear-gradient(180deg,#1e1f22,#141517);overflow:hidden">
  <div class="a" style="left:81px;top:18px;width:75px;height:75px;border-radius:50%;background:linear-gradient(180deg,#d2d2d2,#a9a9a9)"></div>
  <svg class="a" style="left:81px;top:18px" width="75" height="75" viewBox="0 0 75 75"><ellipse cx="37.5" cy="35" rx="9" ry="11" fill="#9c9c9c"/><path d="M19 56 Q21 48 30 45 L45 45 Q54 48 56 56 L56 58 L19 58Z" fill="#9c9c9c"/></svg>
  <div class="a" style="left:3px;top:101px;width:124px;height:40px;background:#0b0b0c"></div>
  <svg class="a" style="left:3px;top:101px" width="30" height="30" viewBox="0 0 30 30"><rect width="30" height="30" fill="#003f9e"/><circle cx="15" cy="10.5" r="4.8" fill="#9a9a9a"/><path d="M5 24.5 Q5 16 15 16 Q25 16 25 24.5 Z" fill="#9a9a9a"/></svg>
  <svg class="a" style="left:43px;top:106px" width="20" height="20" viewBox="0 0 20 20" opacity=".55"><rect x="6.5" y="1" width="7" height="11" rx="3.5" fill="#fff"/><path d="M4 9.5 Q4 15.5 10 15.5 Q16 15.5 16 9.5" stroke="#fff" stroke-width="1.6" fill="none"/><rect x="9.2" y="15" width="1.6" height="3.5" fill="#fff"/><path d="M2.5 18.5 L18 3" stroke="#c0392b" stroke-width="1.8"/></svg>
  <div class="t" style="left:72px;top:108px;font-size:16px;color:#8a8a8a">宗小峰</div>
</div>
<svg class="a" style="left:1290px;top:770px" width="27" height="15" viewBox="0 0 27 15"><path d="M0 0 L27 0 L13.5 15Z" fill="#fff"/></svg>

</div></body></html>
